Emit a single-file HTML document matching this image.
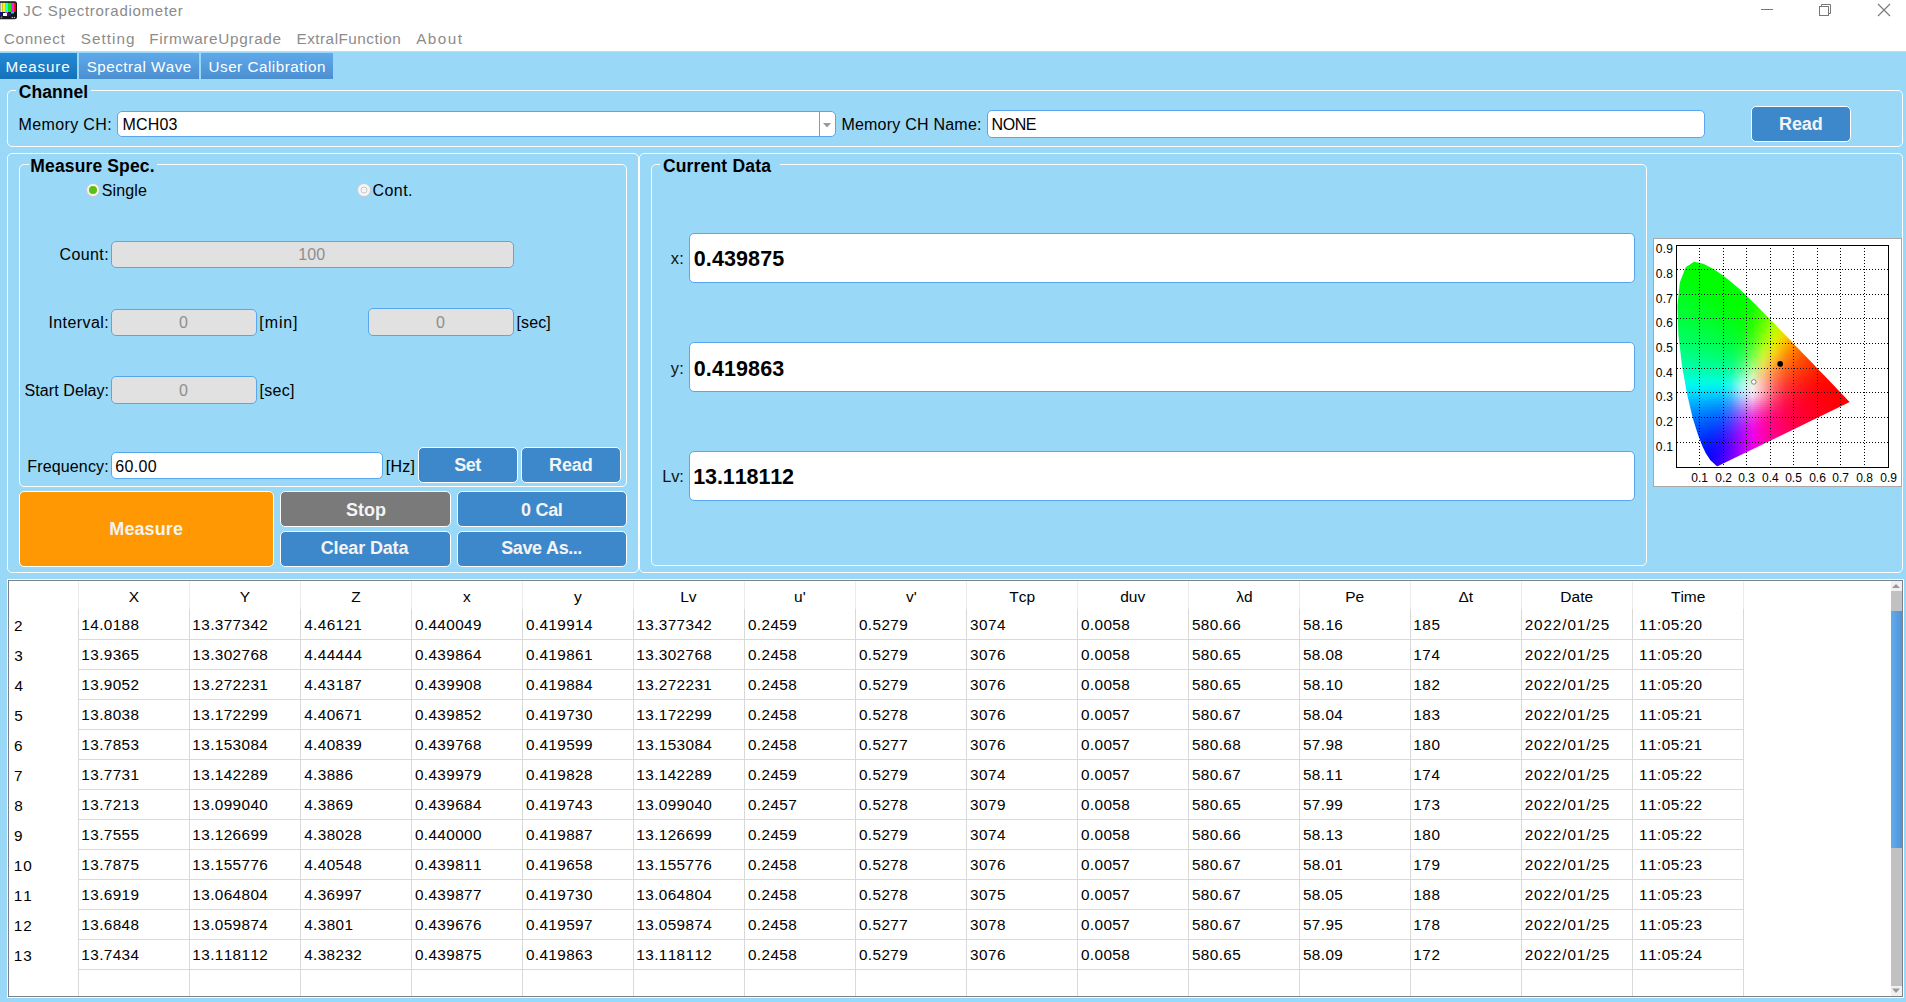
<!DOCTYPE html><html><head><meta charset="utf-8"><style>
html,body{margin:0;padding:0;}
body{width:1906px;height:1002px;position:relative;overflow:hidden;background:#99d8f7;font-family:"Liberation Sans", sans-serif;font-kerning:none;}
.t{position:absolute;white-space:nowrap;font-kerning:none;}
.r{position:absolute;box-sizing:border-box;}

</style></head><body>
<div class="r" style="left:0px;top:0px;width:1906px;height:51px;background:#fff;"></div>
<div class="r" style="left:0px;top:51px;width:1906px;height:1px;background:#d9d6d4;"></div>
<svg style="position:absolute;left:0;top:0" width="19" height="21" viewBox="0 0 19 21">
<rect x="-2" y="1.2" width="19" height="18" rx="2.5" fill="#141414"/>
<rect x="-1" y="2.8" width="2.1" height="9.2" fill="#a8a8a8"/>
<rect x="1.1" y="2.8" width="1.3" height="9.2" fill="#fff"/>
<rect x="2.4" y="2.8" width="2.6" height="9.2" fill="#f8f800"/>
<rect x="5" y="2.8" width="3" height="9.2" fill="#20f8f8"/>
<rect x="8" y="2.8" width="3" height="9.2" fill="#10e810"/>
<rect x="11" y="2.8" width="3" height="9.2" fill="#f820f8"/>
<rect x="14" y="2.8" width="1.8" height="9.2" fill="#f01818"/>
<rect x="-1" y="12" width="3.5" height="4.3" fill="#10108a"/>
<rect x="5" y="12" width="3" height="1.2" fill="#e020e0"/>
<rect x="3" y="13" width="4" height="3" fill="#fff"/>
<rect x="7" y="13" width="4" height="3.3" fill="#2a1580"/>
<rect x="11" y="12" width="3" height="1.5" fill="#20d8d8"/>
<circle cx="1.5" cy="17.5" r="0.9" fill="#e05050"/>
<circle cx="12.3" cy="17.5" r="0.8" fill="#bbb"/>
<circle cx="14.4" cy="17.5" r="0.7" fill="#bbb"/>
</svg>
<div class="t" style="left:23.17px;top:2px;font-size:15.0px;line-height:17px;letter-spacing:0.726px;color:#8a8a8a;">JC Spectroradiometer</div>
<div class="r" style="left:1761px;top:9px;width:12px;height:1px;background:#777;"></div>
<svg style="position:absolute;left:1815px;top:0" width="20" height="20" viewBox="0 0 20 20">
<rect x="4.5" y="6.5" width="9" height="9" fill="none" stroke="#777" stroke-width="1"/>
<path d="M6.5 6.5 V4.5 H15.5 V13.5 H13.5" fill="none" stroke="#777" stroke-width="1"/>
</svg>
<svg style="position:absolute;left:1874px;top:0" width="20" height="20" viewBox="0 0 20 20">
<path d="M4 4 L16 16 M16 4 L4 16" stroke="#777" stroke-width="1.1"/>
</svg>
<div class="t" style="left:3.72px;top:30px;font-size:15.3px;line-height:17px;letter-spacing:0.684px;color:#8c8c8c;">Connect</div>
<div class="t" style="left:80.71px;top:30px;font-size:15.3px;line-height:17px;letter-spacing:1.025px;color:#8c8c8c;">Setting</div>
<div class="t" style="left:149.14px;top:30px;font-size:15.3px;line-height:17px;letter-spacing:0.678px;color:#8c8c8c;">FirmwareUpgrade</div>
<div class="t" style="left:296.44px;top:30px;font-size:15.3px;line-height:17px;letter-spacing:0.497px;color:#8c8c8c;">ExtralFunction</div>
<div class="t" style="left:416.17px;top:30px;font-size:15.3px;line-height:17px;letter-spacing:1.440px;color:#8c8c8c;">About</div>
<div class="r" style="left:0px;top:53px;width:77px;height:26px;background:linear-gradient(#238ad6,#1571b9);"></div>
<div class="r" style="left:79px;top:53px;width:120px;height:26px;background:linear-gradient(#5ea9eb,#4c8fd0);"></div>
<div class="r" style="left:201px;top:53px;width:132px;height:26px;background:linear-gradient(#5ea9eb,#4c8fd0);"></div>
<div class="t" style="left:5.45px;top:58px;font-size:15.2px;line-height:17px;letter-spacing:0.847px;color:#fff;">Measure</div>
<div class="t" style="left:86.71px;top:58px;font-size:15.2px;line-height:17px;letter-spacing:0.486px;color:#fff;">Spectral Wave</div>
<div class="t" style="left:208.53px;top:58px;font-size:15.2px;line-height:17px;letter-spacing:0.532px;color:#fff;">User Calibration</div>
<div class="r" style="left:7px;top:90px;width:1896px;height:57px;border:1.5px solid #fff;border-radius:5px;"></div>
<div class="r" style="left:16px;top:89px;width:75px;height:4px;background:#99d8f7;"></div>
<div class="t" style="left:18.68px;top:82px;font-size:17.5px;line-height:20px;letter-spacing:0.070px;color:#000; font-weight:bold;">Channel</div>
<div class="t" style="left:18.49px;top:116px;font-size:16px;line-height:17px;letter-spacing:0.377px;color:#000;">Memory CH:</div>
<div class="r" style="left:117px;top:111px;width:719px;height:26px;background:#fff;border:1px solid #58a6ee;border-radius:5px;"></div>
<div class="r" style="left:819px;top:112px;width:1px;height:24px;background:#58a6ee;"></div>
<svg style="position:absolute;left:821px;top:121px" width="12" height="8"><path d="M2 2 L10 2 L6 6.5 Z" fill="#999"/></svg>
<div class="t" style="left:122.39px;top:116px;font-size:16px;line-height:17px;letter-spacing:0.195px;color:#000;">MCH03</div>
<div class="t" style="left:841.39px;top:116px;font-size:16px;line-height:17px;letter-spacing:0.226px;color:#000;">Memory CH Name:</div>
<div class="r" style="left:987px;top:110px;width:718px;height:28px;background:#fff;border:1px solid #58a6ee;border-radius:5px;"></div>
<div class="t" style="left:991.49px;top:116px;font-size:16px;line-height:17px;letter-spacing:-0.409px;color:#000;">NONE</div>
<div class="r" style="left:1751px;top:106px;width:100px;height:36px;background:#3c88cb;border:1px solid #fff;border-radius:5px;"></div>
<div class="t" style="left:1779.10px;top:114px;font-size:18px;line-height:20px;letter-spacing:-0.142px;color:#f4f4f4; font-weight:bold;">Read</div>
<div class="r" style="left:7px;top:153px;width:632px;height:420px;border:1.5px solid #fff;border-radius:5px;"></div>
<div class="r" style="left:19px;top:164px;width:608px;height:323px;border:1.5px solid #fff;border-radius:5px;"></div>
<div class="r" style="left:29px;top:163px;width:128px;height:4px;background:#99d8f7;"></div>
<div class="t" style="left:30.33px;top:156px;font-size:17.5px;line-height:20px;letter-spacing:0.135px;color:#000; font-weight:bold;">Measure Spec.</div>
<svg style="position:absolute;left:84.6px;top:182.2px" width="16" height="16"><circle cx="8" cy="8" r="6.5" fill="#f6f6f6" stroke="#c9c9c9" stroke-width="1"/><circle cx="8" cy="8" r="4" fill="#5cc010"/></svg>
<div class="t" style="left:101.67px;top:182px;font-size:16px;line-height:17px;letter-spacing:0.172px;color:#000;">Single</div>
<svg style="position:absolute;left:355.6px;top:182.2px" width="16" height="16"><circle cx="8" cy="8" r="6.5" fill="#f6f6f6" stroke="#c9c9c9" stroke-width="1"/><circle cx="8" cy="8" r="3" fill="none" stroke="#c8c8c8" stroke-width="1"/></svg>
<div class="t" style="left:372.49px;top:182px;font-size:16px;line-height:17px;letter-spacing:0.458px;color:#000;">Cont.</div>
<div class="t" style="left:59.49px;top:246px;font-size:16px;line-height:17px;letter-spacing:0.407px;color:#000;">Count:</div>
<div class="r" style="left:111px;top:241px;width:403px;height:27px;background:#e1e1e1;border:1px solid #58a6ee;border-radius:5px;"></div>
<div class="t" style="left:298.36px;top:246px;font-size:16px;line-height:17px;letter-spacing:0.000px;color:#8e8e8e;">100</div>
<div class="t" style="left:48.42px;top:314px;font-size:16px;line-height:17px;letter-spacing:0.415px;color:#000;">Interval:</div>
<div class="r" style="left:111px;top:309px;width:146px;height:27px;background:#e1e1e1;border:1px solid #58a6ee;border-radius:5px;"></div>
<div class="t" style="left:179.05px;top:314px;font-size:16px;line-height:17px;letter-spacing:0.000px;color:#8e8e8e;">0</div>
<div class="t" style="left:259.36px;top:314px;font-size:16px;line-height:17px;letter-spacing:0.877px;color:#000;">[min]</div>
<div class="r" style="left:368px;top:308px;width:146px;height:28px;background:#e1e1e1;border:1px solid #58a6ee;border-radius:5px;"></div>
<div class="t" style="left:436.05px;top:314px;font-size:16px;line-height:17px;letter-spacing:0.000px;color:#8e8e8e;">0</div>
<div class="t" style="left:516.56px;top:314px;font-size:16px;line-height:17px;letter-spacing:0.098px;color:#000;">[sec]</div>
<div class="t" style="left:24.57px;top:382px;font-size:16px;line-height:17px;letter-spacing:0.082px;color:#000;">Start Delay:</div>
<div class="r" style="left:111px;top:376px;width:146px;height:28px;background:#e1e1e1;border:1px solid #58a6ee;border-radius:5px;"></div>
<div class="t" style="left:179.05px;top:382px;font-size:16px;line-height:17px;letter-spacing:0.000px;color:#8e8e8e;">0</div>
<div class="t" style="left:259.56px;top:382px;font-size:16px;line-height:17px;letter-spacing:0.248px;color:#000;">[sec]</div>
<div class="t" style="left:27.29px;top:458px;font-size:16px;line-height:17px;letter-spacing:0.148px;color:#000;">Frequency:</div>
<div class="r" style="left:111px;top:452px;width:272px;height:27px;background:#fff;border:1px solid #58a6ee;border-radius:5px;"></div>
<div class="t" style="left:115.19px;top:458px;font-size:16px;line-height:17px;letter-spacing:0.325px;color:#000;">60.00</div>
<div class="t" style="left:385.86px;top:458px;font-size:16px;line-height:17px;letter-spacing:0.212px;color:#000;">[Hz]</div>
<div class="r" style="left:418px;top:447px;width:100px;height:36px;background:#3c88cb;border:1px solid #fff;border-radius:5px;"></div>
<div class="t" style="left:454.28px;top:455px;font-size:18px;line-height:20px;letter-spacing:-0.536px;color:#f4f4f4; font-weight:bold;">Set</div>
<div class="r" style="left:521px;top:447px;width:100px;height:36px;background:#3c88cb;border:1px solid #fff;border-radius:5px;"></div>
<div class="t" style="left:549.00px;top:455px;font-size:18px;line-height:20px;letter-spacing:-0.075px;color:#f4f4f4; font-weight:bold;">Read</div>
<div class="r" style="left:19px;top:491px;width:255px;height:76px;background:#ff9802;border:1px solid #fff;border-radius:5px;"></div>
<div class="t" style="left:109.30px;top:519px;font-size:18px;line-height:20px;letter-spacing:0.097px;color:#f4f4f4; font-weight:bold;">Measure</div>
<div class="r" style="left:280px;top:491px;width:171px;height:36px;background:#7a7a7a;border:1px solid #fff;border-radius:5px;"></div>
<div class="t" style="left:345.98px;top:500px;font-size:18px;line-height:20px;letter-spacing:0.022px;color:#f4f4f4; font-weight:bold;">Stop</div>
<div class="r" style="left:457px;top:491px;width:170px;height:36px;background:#3c88cb;border:1px solid #fff;border-radius:5px;"></div>
<div class="t" style="left:520.99px;top:500px;font-size:18px;line-height:20px;letter-spacing:-0.284px;color:#f4f4f4; font-weight:bold;">0 Cal</div>
<div class="r" style="left:280px;top:531px;width:171px;height:36px;background:#3c88cb;border:1px solid #fff;border-radius:5px;"></div>
<div class="t" style="left:320.76px;top:538px;font-size:18px;line-height:20px;letter-spacing:-0.146px;color:#f4f4f4; font-weight:bold;">Clear Data</div>
<div class="r" style="left:457px;top:531px;width:170px;height:36px;background:#3c88cb;border:1px solid #fff;border-radius:5px;"></div>
<div class="t" style="left:501.28px;top:538px;font-size:18px;line-height:20px;letter-spacing:-0.444px;color:#f4f4f4; font-weight:bold;">Save As...</div>
<div class="r" style="left:639px;top:153px;width:1264px;height:420px;border:1.5px solid #fff;border-radius:5px;"></div>
<div class="r" style="left:651px;top:164px;width:996px;height:402px;border:1.5px solid #fff;border-radius:5px;"></div>
<div class="r" style="left:660px;top:163px;width:120px;height:4px;background:#99d8f7;"></div>
<div class="t" style="left:662.88px;top:156px;font-size:17.5px;line-height:20px;letter-spacing:0.183px;color:#000; font-weight:bold;">Current Data</div>
<div class="r" style="left:689px;top:233px;width:946px;height:50px;background:#fff;border:1px solid #58a6ee;border-radius:5px;"></div>
<div class="t" style="left:670.81px;top:249px;font-size:16.5px;line-height:18px;letter-spacing:0.158px;color:#111;">x:</div>
<div class="t" style="left:693.75px;top:247px;font-size:21.5px;line-height:24px;letter-spacing:0.111px;color:#000; font-weight:bold;">0.439875</div>
<div class="r" style="left:689px;top:342px;width:946px;height:50px;background:#fff;border:1px solid #58a6ee;border-radius:5px;"></div>
<div class="t" style="left:670.76px;top:359px;font-size:16.5px;line-height:18px;letter-spacing:0.213px;color:#111;">y:</div>
<div class="t" style="left:693.75px;top:357px;font-size:21.5px;line-height:24px;letter-spacing:0.108px;color:#000; font-weight:bold;">0.419863</div>
<div class="r" style="left:689px;top:451px;width:946px;height:50px;background:#fff;border:1px solid #58a6ee;border-radius:5px;"></div>
<div class="t" style="left:662.25px;top:467px;font-size:16.5px;line-height:18px;letter-spacing:-0.225px;color:#111;">Lv:</div>
<div class="t" style="left:693.25px;top:465px;font-size:21.5px;line-height:24px;letter-spacing:-0.102px;color:#000; font-weight:bold;">13.118112</div>
<svg style="position:absolute;left:1653px;top:238px" width="249" height="249" viewBox="1653 238 249 249"><rect x="1653.5" y="238.5" width="248" height="248" fill="#fff" stroke="#a8a8a8" stroke-width="1"/><defs><clipPath id="lc"><polygon points="1717.5,466.3 1717.5,466.3 1717.3,466.3 1716.9,466.2 1716.3,465.8 1715.2,464.8 1713.4,463.1 1710.4,460.2 1705.8,453.2 1702.3,446.1 1698.0,434.8 1692.7,418.0 1687.2,394.7 1682.0,365.7 1678.4,334.7 1677.4,306.0 1679.8,282.4 1685.7,267.2 1694.0,261.8 1703.4,263.7 1713.0,268.7 1722.0,274.7 1730.6,281.4 1739.1,288.8 1747.6,296.7 1756.0,304.9 1764.4,313.4 1772.8,322.0 1781.2,330.7 1789.4,339.2 1797.3,347.5 1804.9,355.4 1812.1,362.8 1818.6,369.7 1824.3,375.6 1833.4,385.1 1839.5,391.4 1843.4,395.5 1846.0,398.2 1847.6,399.9 1849.7,402.1"/></clipPath><linearGradient id="g0" gradientUnits="userSpaceOnUse" x1="1676" x2="1851" y1="0" y2="0"><stop offset="0.000" stop-color="#00ff02"/><stop offset="0.062" stop-color="#00ff00"/><stop offset="0.125" stop-color="#00ff00"/><stop offset="0.188" stop-color="#00ff00"/><stop offset="0.250" stop-color="#00ff00"/><stop offset="0.312" stop-color="#00ff00"/><stop offset="0.375" stop-color="#00ff00"/><stop offset="0.438" stop-color="#00ff00"/><stop offset="0.500" stop-color="#0aff00"/><stop offset="0.562" stop-color="#27ff00"/><stop offset="0.625" stop-color="#50ff00"/><stop offset="0.688" stop-color="#7eff00"/><stop offset="0.750" stop-color="#afff00"/><stop offset="0.812" stop-color="#e0fb00"/><stop offset="0.875" stop-color="#fbe100"/><stop offset="0.938" stop-color="#ffba00"/><stop offset="1.000" stop-color="#ff9a00"/></linearGradient><linearGradient id="g1" gradientUnits="userSpaceOnUse" x1="1676" x2="1851" y1="0" y2="0"><stop offset="0.000" stop-color="#00ff03"/><stop offset="0.062" stop-color="#00ff01"/><stop offset="0.125" stop-color="#00ff00"/><stop offset="0.188" stop-color="#00ff00"/><stop offset="0.250" stop-color="#00ff00"/><stop offset="0.312" stop-color="#00ff00"/><stop offset="0.375" stop-color="#00ff00"/><stop offset="0.438" stop-color="#01ff00"/><stop offset="0.500" stop-color="#0cff00"/><stop offset="0.562" stop-color="#2aff00"/><stop offset="0.625" stop-color="#53ff00"/><stop offset="0.688" stop-color="#81ff00"/><stop offset="0.750" stop-color="#b4ff00"/><stop offset="0.812" stop-color="#e4f900"/><stop offset="0.875" stop-color="#fcdd00"/><stop offset="0.938" stop-color="#ffb600"/><stop offset="1.000" stop-color="#ff9600"/></linearGradient><linearGradient id="g2" gradientUnits="userSpaceOnUse" x1="1676" x2="1851" y1="0" y2="0"><stop offset="0.000" stop-color="#00ff05"/><stop offset="0.062" stop-color="#00ff01"/><stop offset="0.125" stop-color="#00ff00"/><stop offset="0.188" stop-color="#00ff00"/><stop offset="0.250" stop-color="#00ff00"/><stop offset="0.312" stop-color="#00ff00"/><stop offset="0.375" stop-color="#00ff00"/><stop offset="0.438" stop-color="#01ff00"/><stop offset="0.500" stop-color="#0dff00"/><stop offset="0.562" stop-color="#2cff00"/><stop offset="0.625" stop-color="#57ff00"/><stop offset="0.688" stop-color="#85ff00"/><stop offset="0.750" stop-color="#b8ff00"/><stop offset="0.812" stop-color="#e8f700"/><stop offset="0.875" stop-color="#fdd800"/><stop offset="0.938" stop-color="#ffb100"/><stop offset="1.000" stop-color="#ff9300"/></linearGradient><linearGradient id="g3" gradientUnits="userSpaceOnUse" x1="1676" x2="1851" y1="0" y2="0"><stop offset="0.000" stop-color="#00ff06"/><stop offset="0.062" stop-color="#00ff02"/><stop offset="0.125" stop-color="#00ff00"/><stop offset="0.188" stop-color="#00ff00"/><stop offset="0.250" stop-color="#00ff00"/><stop offset="0.312" stop-color="#00ff00"/><stop offset="0.375" stop-color="#00ff00"/><stop offset="0.438" stop-color="#01ff00"/><stop offset="0.500" stop-color="#0eff00"/><stop offset="0.562" stop-color="#2eff00"/><stop offset="0.625" stop-color="#5aff00"/><stop offset="0.688" stop-color="#89ff00"/><stop offset="0.750" stop-color="#bdff00"/><stop offset="0.812" stop-color="#ebf500"/><stop offset="0.875" stop-color="#fdd400"/><stop offset="0.938" stop-color="#ffad00"/><stop offset="1.000" stop-color="#ff8f00"/></linearGradient><linearGradient id="g4" gradientUnits="userSpaceOnUse" x1="1676" x2="1851" y1="0" y2="0"><stop offset="0.000" stop-color="#00ff07"/><stop offset="0.062" stop-color="#00ff02"/><stop offset="0.125" stop-color="#00ff00"/><stop offset="0.188" stop-color="#00ff00"/><stop offset="0.250" stop-color="#00ff00"/><stop offset="0.312" stop-color="#00ff00"/><stop offset="0.375" stop-color="#00ff00"/><stop offset="0.438" stop-color="#01ff00"/><stop offset="0.500" stop-color="#10ff00"/><stop offset="0.562" stop-color="#31ff00"/><stop offset="0.625" stop-color="#5dff00"/><stop offset="0.688" stop-color="#8eff00"/><stop offset="0.750" stop-color="#c2fe00"/><stop offset="0.812" stop-color="#eff300"/><stop offset="0.875" stop-color="#fecf00"/><stop offset="0.938" stop-color="#ffa900"/><stop offset="1.000" stop-color="#ff8c00"/></linearGradient><linearGradient id="g5" gradientUnits="userSpaceOnUse" x1="1676" x2="1851" y1="0" y2="0"><stop offset="0.000" stop-color="#00ff09"/><stop offset="0.062" stop-color="#00ff03"/><stop offset="0.125" stop-color="#00ff01"/><stop offset="0.188" stop-color="#00ff00"/><stop offset="0.250" stop-color="#00ff00"/><stop offset="0.312" stop-color="#00ff00"/><stop offset="0.375" stop-color="#00ff00"/><stop offset="0.438" stop-color="#01ff00"/><stop offset="0.500" stop-color="#11ff00"/><stop offset="0.562" stop-color="#34ff00"/><stop offset="0.625" stop-color="#61ff00"/><stop offset="0.688" stop-color="#92ff00"/><stop offset="0.750" stop-color="#c7fe00"/><stop offset="0.812" stop-color="#f2f000"/><stop offset="0.875" stop-color="#feca00"/><stop offset="0.938" stop-color="#ffa500"/><stop offset="1.000" stop-color="#ff8800"/></linearGradient><linearGradient id="g6" gradientUnits="userSpaceOnUse" x1="1676" x2="1851" y1="0" y2="0"><stop offset="0.000" stop-color="#00ff0a"/><stop offset="0.062" stop-color="#00ff04"/><stop offset="0.125" stop-color="#00ff01"/><stop offset="0.188" stop-color="#00ff00"/><stop offset="0.250" stop-color="#00ff00"/><stop offset="0.312" stop-color="#00ff00"/><stop offset="0.375" stop-color="#00ff00"/><stop offset="0.438" stop-color="#02ff00"/><stop offset="0.500" stop-color="#13ff00"/><stop offset="0.562" stop-color="#36ff00"/><stop offset="0.625" stop-color="#64ff00"/><stop offset="0.688" stop-color="#96ff00"/><stop offset="0.750" stop-color="#ccfd00"/><stop offset="0.812" stop-color="#f4ec00"/><stop offset="0.875" stop-color="#ffc500"/><stop offset="0.938" stop-color="#ffa100"/><stop offset="1.000" stop-color="#ff8500"/></linearGradient><linearGradient id="g7" gradientUnits="userSpaceOnUse" x1="1676" x2="1851" y1="0" y2="0"><stop offset="0.000" stop-color="#00ff0c"/><stop offset="0.062" stop-color="#00ff05"/><stop offset="0.125" stop-color="#00ff01"/><stop offset="0.188" stop-color="#00ff00"/><stop offset="0.250" stop-color="#00ff00"/><stop offset="0.312" stop-color="#00ff00"/><stop offset="0.375" stop-color="#00ff00"/><stop offset="0.438" stop-color="#02ff00"/><stop offset="0.500" stop-color="#15ff00"/><stop offset="0.562" stop-color="#39ff00"/><stop offset="0.625" stop-color="#68ff00"/><stop offset="0.688" stop-color="#9bff00"/><stop offset="0.750" stop-color="#d1fd00"/><stop offset="0.812" stop-color="#f6e900"/><stop offset="0.875" stop-color="#ffc100"/><stop offset="0.938" stop-color="#ff9d00"/><stop offset="1.000" stop-color="#ff8100"/></linearGradient><linearGradient id="g8" gradientUnits="userSpaceOnUse" x1="1676" x2="1851" y1="0" y2="0"><stop offset="0.000" stop-color="#00ff0e"/><stop offset="0.062" stop-color="#00ff07"/><stop offset="0.125" stop-color="#00ff02"/><stop offset="0.188" stop-color="#00ff00"/><stop offset="0.250" stop-color="#00ff00"/><stop offset="0.312" stop-color="#00ff00"/><stop offset="0.375" stop-color="#00ff00"/><stop offset="0.438" stop-color="#02ff00"/><stop offset="0.500" stop-color="#17ff00"/><stop offset="0.562" stop-color="#3cff00"/><stop offset="0.625" stop-color="#6bff00"/><stop offset="0.688" stop-color="#a0ff00"/><stop offset="0.750" stop-color="#d6fc00"/><stop offset="0.812" stop-color="#f8e500"/><stop offset="0.875" stop-color="#ffbc00"/><stop offset="0.938" stop-color="#ff9900"/><stop offset="1.000" stop-color="#ff7e00"/></linearGradient><linearGradient id="g9" gradientUnits="userSpaceOnUse" x1="1676" x2="1851" y1="0" y2="0"><stop offset="0.000" stop-color="#00ff10"/><stop offset="0.062" stop-color="#00ff09"/><stop offset="0.125" stop-color="#00ff03"/><stop offset="0.188" stop-color="#00ff00"/><stop offset="0.250" stop-color="#00ff00"/><stop offset="0.312" stop-color="#00ff00"/><stop offset="0.375" stop-color="#00ff00"/><stop offset="0.438" stop-color="#03ff00"/><stop offset="0.500" stop-color="#19ff00"/><stop offset="0.562" stop-color="#3fff00"/><stop offset="0.625" stop-color="#6fff00"/><stop offset="0.688" stop-color="#a4ff00"/><stop offset="0.750" stop-color="#dafb00"/><stop offset="0.812" stop-color="#fae000"/><stop offset="0.875" stop-color="#ffb700"/><stop offset="0.938" stop-color="#ff9500"/><stop offset="1.000" stop-color="#ff7b00"/></linearGradient><linearGradient id="g10" gradientUnits="userSpaceOnUse" x1="1676" x2="1851" y1="0" y2="0"><stop offset="0.000" stop-color="#00ff12"/><stop offset="0.062" stop-color="#00ff0a"/><stop offset="0.125" stop-color="#00ff04"/><stop offset="0.188" stop-color="#00ff01"/><stop offset="0.250" stop-color="#00ff00"/><stop offset="0.312" stop-color="#00ff00"/><stop offset="0.375" stop-color="#00ff00"/><stop offset="0.438" stop-color="#03ff00"/><stop offset="0.500" stop-color="#1bff00"/><stop offset="0.562" stop-color="#42ff00"/><stop offset="0.625" stop-color="#73ff00"/><stop offset="0.688" stop-color="#a9ff00"/><stop offset="0.750" stop-color="#dff900"/><stop offset="0.812" stop-color="#fbdc00"/><stop offset="0.875" stop-color="#ffb200"/><stop offset="0.938" stop-color="#ff9100"/><stop offset="1.000" stop-color="#ff7700"/></linearGradient><linearGradient id="g11" gradientUnits="userSpaceOnUse" x1="1676" x2="1851" y1="0" y2="0"><stop offset="0.000" stop-color="#00ff14"/><stop offset="0.062" stop-color="#00ff0c"/><stop offset="0.125" stop-color="#00ff05"/><stop offset="0.188" stop-color="#00ff01"/><stop offset="0.250" stop-color="#00ff00"/><stop offset="0.312" stop-color="#00ff00"/><stop offset="0.375" stop-color="#00ff00"/><stop offset="0.438" stop-color="#04ff00"/><stop offset="0.500" stop-color="#1dff00"/><stop offset="0.562" stop-color="#45ff00"/><stop offset="0.625" stop-color="#77ff00"/><stop offset="0.688" stop-color="#aeff00"/><stop offset="0.750" stop-color="#e3f800"/><stop offset="0.812" stop-color="#fcd700"/><stop offset="0.875" stop-color="#ffae00"/><stop offset="0.938" stop-color="#ff8d00"/><stop offset="1.000" stop-color="#ff7400"/></linearGradient><linearGradient id="g12" gradientUnits="userSpaceOnUse" x1="1676" x2="1851" y1="0" y2="0"><stop offset="0.000" stop-color="#00ff16"/><stop offset="0.062" stop-color="#00ff0e"/><stop offset="0.125" stop-color="#00ff07"/><stop offset="0.188" stop-color="#00ff02"/><stop offset="0.250" stop-color="#00ff00"/><stop offset="0.312" stop-color="#00ff00"/><stop offset="0.375" stop-color="#00ff00"/><stop offset="0.438" stop-color="#04ff00"/><stop offset="0.500" stop-color="#1fff00"/><stop offset="0.562" stop-color="#48ff00"/><stop offset="0.625" stop-color="#7bff00"/><stop offset="0.688" stop-color="#b4ff00"/><stop offset="0.750" stop-color="#e7f500"/><stop offset="0.812" stop-color="#fdd200"/><stop offset="0.875" stop-color="#ffa900"/><stop offset="0.938" stop-color="#ff8900"/><stop offset="1.000" stop-color="#ff7100"/></linearGradient><linearGradient id="g13" gradientUnits="userSpaceOnUse" x1="1676" x2="1851" y1="0" y2="0"><stop offset="0.000" stop-color="#00ff18"/><stop offset="0.062" stop-color="#00ff10"/><stop offset="0.125" stop-color="#00ff08"/><stop offset="0.188" stop-color="#00ff02"/><stop offset="0.250" stop-color="#00ff00"/><stop offset="0.312" stop-color="#00ff00"/><stop offset="0.375" stop-color="#00ff00"/><stop offset="0.438" stop-color="#05ff00"/><stop offset="0.500" stop-color="#22ff00"/><stop offset="0.562" stop-color="#4cff00"/><stop offset="0.625" stop-color="#80ff00"/><stop offset="0.688" stop-color="#b9fe00"/><stop offset="0.750" stop-color="#ebf300"/><stop offset="0.812" stop-color="#fecd00"/><stop offset="0.875" stop-color="#ffa400"/><stop offset="0.938" stop-color="#ff8500"/><stop offset="1.000" stop-color="#ff6e00"/></linearGradient><linearGradient id="g14" gradientUnits="userSpaceOnUse" x1="1676" x2="1851" y1="0" y2="0"><stop offset="0.000" stop-color="#00ff1a"/><stop offset="0.062" stop-color="#00ff12"/><stop offset="0.125" stop-color="#00ff0a"/><stop offset="0.188" stop-color="#00ff03"/><stop offset="0.250" stop-color="#00ff01"/><stop offset="0.312" stop-color="#00ff00"/><stop offset="0.375" stop-color="#00ff00"/><stop offset="0.438" stop-color="#06ff00"/><stop offset="0.500" stop-color="#24ff00"/><stop offset="0.562" stop-color="#4fff00"/><stop offset="0.625" stop-color="#84ff00"/><stop offset="0.688" stop-color="#befe00"/><stop offset="0.750" stop-color="#eff000"/><stop offset="0.812" stop-color="#fec800"/><stop offset="0.875" stop-color="#ffa000"/><stop offset="0.938" stop-color="#ff8200"/><stop offset="1.000" stop-color="#ff6b00"/></linearGradient><linearGradient id="g15" gradientUnits="userSpaceOnUse" x1="1676" x2="1851" y1="0" y2="0"><stop offset="0.000" stop-color="#00ff1d"/><stop offset="0.062" stop-color="#00ff15"/><stop offset="0.125" stop-color="#00ff0c"/><stop offset="0.188" stop-color="#00ff05"/><stop offset="0.250" stop-color="#00ff01"/><stop offset="0.312" stop-color="#00ff00"/><stop offset="0.375" stop-color="#00ff00"/><stop offset="0.438" stop-color="#07ff00"/><stop offset="0.500" stop-color="#27ff00"/><stop offset="0.562" stop-color="#53ff00"/><stop offset="0.625" stop-color="#89ff00"/><stop offset="0.688" stop-color="#c4fe00"/><stop offset="0.750" stop-color="#f2ec00"/><stop offset="0.812" stop-color="#fec300"/><stop offset="0.875" stop-color="#ff9c00"/><stop offset="0.938" stop-color="#ff7e00"/><stop offset="1.000" stop-color="#ff6800"/></linearGradient><linearGradient id="g16" gradientUnits="userSpaceOnUse" x1="1676" x2="1851" y1="0" y2="0"><stop offset="0.000" stop-color="#00ff1f"/><stop offset="0.062" stop-color="#00ff17"/><stop offset="0.125" stop-color="#00ff0e"/><stop offset="0.188" stop-color="#00ff06"/><stop offset="0.250" stop-color="#00ff01"/><stop offset="0.312" stop-color="#00ff00"/><stop offset="0.375" stop-color="#00ff00"/><stop offset="0.438" stop-color="#08ff00"/><stop offset="0.500" stop-color="#29ff00"/><stop offset="0.562" stop-color="#56ff00"/><stop offset="0.625" stop-color="#8eff00"/><stop offset="0.688" stop-color="#c9fd00"/><stop offset="0.750" stop-color="#f4e900"/><stop offset="0.812" stop-color="#ffbe00"/><stop offset="0.875" stop-color="#ff9700"/><stop offset="0.938" stop-color="#ff7b00"/><stop offset="1.000" stop-color="#ff6400"/></linearGradient><linearGradient id="g17" gradientUnits="userSpaceOnUse" x1="1676" x2="1851" y1="0" y2="0"><stop offset="0.000" stop-color="#00ff21"/><stop offset="0.062" stop-color="#00ff19"/><stop offset="0.125" stop-color="#00ff10"/><stop offset="0.188" stop-color="#00ff08"/><stop offset="0.250" stop-color="#00ff02"/><stop offset="0.312" stop-color="#00ff00"/><stop offset="0.375" stop-color="#00ff00"/><stop offset="0.438" stop-color="#09ff00"/><stop offset="0.500" stop-color="#2cff00"/><stop offset="0.562" stop-color="#5aff00"/><stop offset="0.625" stop-color="#93ff00"/><stop offset="0.688" stop-color="#cefc00"/><stop offset="0.750" stop-color="#f7e400"/><stop offset="0.812" stop-color="#ffb800"/><stop offset="0.875" stop-color="#ff9300"/><stop offset="0.938" stop-color="#ff7700"/><stop offset="1.000" stop-color="#ff6100"/></linearGradient><linearGradient id="g18" gradientUnits="userSpaceOnUse" x1="1676" x2="1851" y1="0" y2="0"><stop offset="0.000" stop-color="#00ff23"/><stop offset="0.062" stop-color="#00ff1b"/><stop offset="0.125" stop-color="#00ff13"/><stop offset="0.188" stop-color="#00ff0a"/><stop offset="0.250" stop-color="#00ff03"/><stop offset="0.312" stop-color="#00ff00"/><stop offset="0.375" stop-color="#00ff00"/><stop offset="0.438" stop-color="#0aff00"/><stop offset="0.500" stop-color="#2fff00"/><stop offset="0.562" stop-color="#5eff00"/><stop offset="0.625" stop-color="#98ff00"/><stop offset="0.688" stop-color="#d4fb00"/><stop offset="0.750" stop-color="#f8e000"/><stop offset="0.812" stop-color="#ffb300"/><stop offset="0.875" stop-color="#ff8f00"/><stop offset="0.938" stop-color="#ff7300"/><stop offset="1.000" stop-color="#ff5e00"/></linearGradient><linearGradient id="g19" gradientUnits="userSpaceOnUse" x1="1676" x2="1851" y1="0" y2="0"><stop offset="0.000" stop-color="#00ff26"/><stop offset="0.062" stop-color="#00ff1e"/><stop offset="0.125" stop-color="#00ff15"/><stop offset="0.188" stop-color="#00ff0c"/><stop offset="0.250" stop-color="#00ff04"/><stop offset="0.312" stop-color="#00ff01"/><stop offset="0.375" stop-color="#00ff00"/><stop offset="0.438" stop-color="#0bff00"/><stop offset="0.500" stop-color="#32ff00"/><stop offset="0.562" stop-color="#62ff00"/><stop offset="0.625" stop-color="#9dff00"/><stop offset="0.688" stop-color="#d9fa00"/><stop offset="0.750" stop-color="#fadb00"/><stop offset="0.812" stop-color="#ffae00"/><stop offset="0.875" stop-color="#ff8a00"/><stop offset="0.938" stop-color="#ff7000"/><stop offset="1.000" stop-color="#ff5b00"/></linearGradient><linearGradient id="g20" gradientUnits="userSpaceOnUse" x1="1676" x2="1851" y1="0" y2="0"><stop offset="0.000" stop-color="#00ff28"/><stop offset="0.062" stop-color="#00ff20"/><stop offset="0.125" stop-color="#00ff18"/><stop offset="0.188" stop-color="#00ff0e"/><stop offset="0.250" stop-color="#00ff06"/><stop offset="0.312" stop-color="#00ff01"/><stop offset="0.375" stop-color="#01ff00"/><stop offset="0.438" stop-color="#0cff00"/><stop offset="0.500" stop-color="#35ff00"/><stop offset="0.562" stop-color="#66ff00"/><stop offset="0.625" stop-color="#a2ff00"/><stop offset="0.688" stop-color="#def800"/><stop offset="0.750" stop-color="#fbd600"/><stop offset="0.812" stop-color="#ffa900"/><stop offset="0.875" stop-color="#ff8600"/><stop offset="0.938" stop-color="#ff6d00"/><stop offset="1.000" stop-color="#ff5900"/></linearGradient><linearGradient id="g21" gradientUnits="userSpaceOnUse" x1="1676" x2="1851" y1="0" y2="0"><stop offset="0.000" stop-color="#00ff2b"/><stop offset="0.062" stop-color="#00ff23"/><stop offset="0.125" stop-color="#00ff1a"/><stop offset="0.188" stop-color="#00ff11"/><stop offset="0.250" stop-color="#00ff08"/><stop offset="0.312" stop-color="#00ff02"/><stop offset="0.375" stop-color="#01ff00"/><stop offset="0.438" stop-color="#0eff00"/><stop offset="0.500" stop-color="#38ff00"/><stop offset="0.562" stop-color="#6bff00"/><stop offset="0.625" stop-color="#a8ff00"/><stop offset="0.688" stop-color="#e2f600"/><stop offset="0.750" stop-color="#fcd000"/><stop offset="0.812" stop-color="#ffa400"/><stop offset="0.875" stop-color="#ff8200"/><stop offset="0.938" stop-color="#ff6900"/><stop offset="1.000" stop-color="#ff5600"/></linearGradient><linearGradient id="g22" gradientUnits="userSpaceOnUse" x1="1676" x2="1851" y1="0" y2="0"><stop offset="0.000" stop-color="#00ff2d"/><stop offset="0.062" stop-color="#00ff25"/><stop offset="0.125" stop-color="#00ff1d"/><stop offset="0.188" stop-color="#00ff13"/><stop offset="0.250" stop-color="#00ff0a"/><stop offset="0.312" stop-color="#00ff03"/><stop offset="0.375" stop-color="#01ff00"/><stop offset="0.438" stop-color="#10ff00"/><stop offset="0.500" stop-color="#3cff00"/><stop offset="0.562" stop-color="#6fff00"/><stop offset="0.625" stop-color="#aefe00"/><stop offset="0.688" stop-color="#e7f300"/><stop offset="0.750" stop-color="#fdcb00"/><stop offset="0.812" stop-color="#ff9f00"/><stop offset="0.875" stop-color="#ff7e00"/><stop offset="0.938" stop-color="#ff6600"/><stop offset="1.000" stop-color="#ff5300"/></linearGradient><linearGradient id="g23" gradientUnits="userSpaceOnUse" x1="1676" x2="1851" y1="0" y2="0"><stop offset="0.000" stop-color="#00ff30"/><stop offset="0.062" stop-color="#00ff28"/><stop offset="0.125" stop-color="#00ff1f"/><stop offset="0.188" stop-color="#00ff16"/><stop offset="0.250" stop-color="#00ff0c"/><stop offset="0.312" stop-color="#00ff04"/><stop offset="0.375" stop-color="#01ff01"/><stop offset="0.438" stop-color="#11ff00"/><stop offset="0.500" stop-color="#3fff00"/><stop offset="0.562" stop-color="#74ff00"/><stop offset="0.625" stop-color="#b3fe00"/><stop offset="0.688" stop-color="#ebf000"/><stop offset="0.750" stop-color="#fec500"/><stop offset="0.812" stop-color="#ff9a00"/><stop offset="0.875" stop-color="#ff7a00"/><stop offset="0.938" stop-color="#ff6200"/><stop offset="1.000" stop-color="#ff5000"/></linearGradient><linearGradient id="g24" gradientUnits="userSpaceOnUse" x1="1676" x2="1851" y1="0" y2="0"><stop offset="0.000" stop-color="#00ff33"/><stop offset="0.062" stop-color="#00ff2b"/><stop offset="0.125" stop-color="#00ff22"/><stop offset="0.188" stop-color="#00ff19"/><stop offset="0.250" stop-color="#00ff0e"/><stop offset="0.312" stop-color="#00ff06"/><stop offset="0.375" stop-color="#01ff01"/><stop offset="0.438" stop-color="#13ff00"/><stop offset="0.500" stop-color="#43ff00"/><stop offset="0.562" stop-color="#79ff00"/><stop offset="0.625" stop-color="#b9fe00"/><stop offset="0.688" stop-color="#eeec00"/><stop offset="0.750" stop-color="#fec000"/><stop offset="0.812" stop-color="#ff9500"/><stop offset="0.875" stop-color="#ff7600"/><stop offset="0.938" stop-color="#ff5f00"/><stop offset="1.000" stop-color="#ff4d00"/></linearGradient><linearGradient id="g25" gradientUnits="userSpaceOnUse" x1="1676" x2="1851" y1="0" y2="0"><stop offset="0.000" stop-color="#00ff36"/><stop offset="0.062" stop-color="#00ff2e"/><stop offset="0.125" stop-color="#00ff25"/><stop offset="0.188" stop-color="#00ff1b"/><stop offset="0.250" stop-color="#00ff11"/><stop offset="0.312" stop-color="#00ff07"/><stop offset="0.375" stop-color="#02ff02"/><stop offset="0.438" stop-color="#15ff00"/><stop offset="0.500" stop-color="#47ff00"/><stop offset="0.562" stop-color="#7eff00"/><stop offset="0.625" stop-color="#bffd00"/><stop offset="0.688" stop-color="#f1e800"/><stop offset="0.750" stop-color="#feba00"/><stop offset="0.812" stop-color="#ff9100"/><stop offset="0.875" stop-color="#ff7300"/><stop offset="0.938" stop-color="#ff5c00"/><stop offset="1.000" stop-color="#ff4a00"/></linearGradient><linearGradient id="g26" gradientUnits="userSpaceOnUse" x1="1676" x2="1851" y1="0" y2="0"><stop offset="0.000" stop-color="#00ff38"/><stop offset="0.062" stop-color="#00ff30"/><stop offset="0.125" stop-color="#00ff28"/><stop offset="0.188" stop-color="#00ff1e"/><stop offset="0.250" stop-color="#00ff14"/><stop offset="0.312" stop-color="#00ff0a"/><stop offset="0.375" stop-color="#02ff03"/><stop offset="0.438" stop-color="#17ff00"/><stop offset="0.500" stop-color="#4bff00"/><stop offset="0.562" stop-color="#83ff00"/><stop offset="0.625" stop-color="#c5fc00"/><stop offset="0.688" stop-color="#f4e400"/><stop offset="0.750" stop-color="#ffb400"/><stop offset="0.812" stop-color="#ff8c00"/><stop offset="0.875" stop-color="#ff6f00"/><stop offset="0.938" stop-color="#ff5900"/><stop offset="1.000" stop-color="#ff4800"/></linearGradient><linearGradient id="g27" gradientUnits="userSpaceOnUse" x1="1676" x2="1851" y1="0" y2="0"><stop offset="0.000" stop-color="#00ff3b"/><stop offset="0.062" stop-color="#00ff33"/><stop offset="0.125" stop-color="#00ff2b"/><stop offset="0.188" stop-color="#00ff21"/><stop offset="0.250" stop-color="#00ff17"/><stop offset="0.312" stop-color="#00ff0c"/><stop offset="0.375" stop-color="#02ff04"/><stop offset="0.438" stop-color="#1aff01"/><stop offset="0.500" stop-color="#4fff00"/><stop offset="0.562" stop-color="#88ff00"/><stop offset="0.625" stop-color="#cbfb00"/><stop offset="0.688" stop-color="#f7df00"/><stop offset="0.750" stop-color="#ffaf00"/><stop offset="0.812" stop-color="#ff8700"/><stop offset="0.875" stop-color="#ff6b00"/><stop offset="0.938" stop-color="#ff5600"/><stop offset="1.000" stop-color="#ff4500"/></linearGradient><linearGradient id="g28" gradientUnits="userSpaceOnUse" x1="1676" x2="1851" y1="0" y2="0"><stop offset="0.000" stop-color="#00ff3e"/><stop offset="0.062" stop-color="#00ff36"/><stop offset="0.125" stop-color="#00ff2e"/><stop offset="0.188" stop-color="#00ff24"/><stop offset="0.250" stop-color="#00ff1a"/><stop offset="0.312" stop-color="#00ff0f"/><stop offset="0.375" stop-color="#03ff05"/><stop offset="0.438" stop-color="#1cff01"/><stop offset="0.500" stop-color="#53ff00"/><stop offset="0.562" stop-color="#8eff00"/><stop offset="0.625" stop-color="#d1fa00"/><stop offset="0.688" stop-color="#f9da00"/><stop offset="0.750" stop-color="#ffa900"/><stop offset="0.812" stop-color="#ff8300"/><stop offset="0.875" stop-color="#ff6700"/><stop offset="0.938" stop-color="#ff5300"/><stop offset="1.000" stop-color="#ff4200"/></linearGradient><linearGradient id="g29" gradientUnits="userSpaceOnUse" x1="1676" x2="1851" y1="0" y2="0"><stop offset="0.000" stop-color="#00ff41"/><stop offset="0.062" stop-color="#00ff39"/><stop offset="0.125" stop-color="#00ff31"/><stop offset="0.188" stop-color="#00ff27"/><stop offset="0.250" stop-color="#00ff1d"/><stop offset="0.312" stop-color="#00ff12"/><stop offset="0.375" stop-color="#03ff07"/><stop offset="0.438" stop-color="#1fff02"/><stop offset="0.500" stop-color="#57ff00"/><stop offset="0.562" stop-color="#93ff00"/><stop offset="0.625" stop-color="#d6f800"/><stop offset="0.688" stop-color="#fad400"/><stop offset="0.750" stop-color="#ffa300"/><stop offset="0.812" stop-color="#ff7f00"/><stop offset="0.875" stop-color="#ff6400"/><stop offset="0.938" stop-color="#ff4f00"/><stop offset="1.000" stop-color="#ff4000"/></linearGradient><linearGradient id="g30" gradientUnits="userSpaceOnUse" x1="1676" x2="1851" y1="0" y2="0"><stop offset="0.000" stop-color="#00ff45"/><stop offset="0.062" stop-color="#00ff3d"/><stop offset="0.125" stop-color="#00ff34"/><stop offset="0.188" stop-color="#00ff2a"/><stop offset="0.250" stop-color="#00ff20"/><stop offset="0.312" stop-color="#00ff15"/><stop offset="0.375" stop-color="#04ff0a"/><stop offset="0.438" stop-color="#22ff02"/><stop offset="0.500" stop-color="#5cff00"/><stop offset="0.562" stop-color="#99ff00"/><stop offset="0.625" stop-color="#dcf600"/><stop offset="0.688" stop-color="#fbce00"/><stop offset="0.750" stop-color="#ff9e00"/><stop offset="0.812" stop-color="#ff7a00"/><stop offset="0.875" stop-color="#ff6000"/><stop offset="0.938" stop-color="#ff4c00"/><stop offset="1.000" stop-color="#ff3d00"/></linearGradient><linearGradient id="g31" gradientUnits="userSpaceOnUse" x1="1676" x2="1851" y1="0" y2="0"><stop offset="0.000" stop-color="#00ff48"/><stop offset="0.062" stop-color="#00ff40"/><stop offset="0.125" stop-color="#00ff37"/><stop offset="0.188" stop-color="#00ff2e"/><stop offset="0.250" stop-color="#00ff23"/><stop offset="0.312" stop-color="#00ff18"/><stop offset="0.375" stop-color="#04ff0c"/><stop offset="0.438" stop-color="#25ff04"/><stop offset="0.500" stop-color="#61ff00"/><stop offset="0.562" stop-color="#a0fe00"/><stop offset="0.625" stop-color="#e1f300"/><stop offset="0.688" stop-color="#fcc800"/><stop offset="0.750" stop-color="#ff9900"/><stop offset="0.812" stop-color="#ff7600"/><stop offset="0.875" stop-color="#ff5d00"/><stop offset="0.938" stop-color="#ff4900"/><stop offset="1.000" stop-color="#ff3a00"/></linearGradient><linearGradient id="g32" gradientUnits="userSpaceOnUse" x1="1676" x2="1851" y1="0" y2="0"><stop offset="0.000" stop-color="#00ff4b"/><stop offset="0.062" stop-color="#00ff43"/><stop offset="0.125" stop-color="#00ff3b"/><stop offset="0.188" stop-color="#00ff31"/><stop offset="0.250" stop-color="#00ff27"/><stop offset="0.312" stop-color="#00ff1b"/><stop offset="0.375" stop-color="#05ff0f"/><stop offset="0.438" stop-color="#28ff05"/><stop offset="0.500" stop-color="#65ff01"/><stop offset="0.562" stop-color="#a6fe00"/><stop offset="0.625" stop-color="#e6f000"/><stop offset="0.688" stop-color="#fdc200"/><stop offset="0.750" stop-color="#ff9300"/><stop offset="0.812" stop-color="#ff7200"/><stop offset="0.875" stop-color="#ff5900"/><stop offset="0.938" stop-color="#ff4600"/><stop offset="1.000" stop-color="#ff3800"/></linearGradient><linearGradient id="g33" gradientUnits="userSpaceOnUse" x1="1676" x2="1851" y1="0" y2="0"><stop offset="0.000" stop-color="#00ff4e"/><stop offset="0.062" stop-color="#00ff47"/><stop offset="0.125" stop-color="#00ff3e"/><stop offset="0.188" stop-color="#00ff35"/><stop offset="0.250" stop-color="#00ff2a"/><stop offset="0.312" stop-color="#00ff1f"/><stop offset="0.375" stop-color="#06ff12"/><stop offset="0.438" stop-color="#2bff07"/><stop offset="0.500" stop-color="#6bff01"/><stop offset="0.562" stop-color="#acfe00"/><stop offset="0.625" stop-color="#eaec00"/><stop offset="0.688" stop-color="#febc00"/><stop offset="0.750" stop-color="#ff8e00"/><stop offset="0.812" stop-color="#ff6d00"/><stop offset="0.875" stop-color="#ff5600"/><stop offset="0.938" stop-color="#ff4300"/><stop offset="1.000" stop-color="#ff3500"/></linearGradient><linearGradient id="g34" gradientUnits="userSpaceOnUse" x1="1676" x2="1851" y1="0" y2="0"><stop offset="0.000" stop-color="#00ff52"/><stop offset="0.062" stop-color="#00ff4a"/><stop offset="0.125" stop-color="#00ff42"/><stop offset="0.188" stop-color="#00ff38"/><stop offset="0.250" stop-color="#00ff2e"/><stop offset="0.312" stop-color="#00ff22"/><stop offset="0.375" stop-color="#07ff16"/><stop offset="0.438" stop-color="#2fff09"/><stop offset="0.500" stop-color="#70ff02"/><stop offset="0.562" stop-color="#b3fd00"/><stop offset="0.625" stop-color="#eee800"/><stop offset="0.688" stop-color="#feb600"/><stop offset="0.750" stop-color="#ff8900"/><stop offset="0.812" stop-color="#ff6900"/><stop offset="0.875" stop-color="#ff5200"/><stop offset="0.938" stop-color="#ff4100"/><stop offset="1.000" stop-color="#ff3300"/></linearGradient><linearGradient id="g35" gradientUnits="userSpaceOnUse" x1="1676" x2="1851" y1="0" y2="0"><stop offset="0.000" stop-color="#00ff56"/><stop offset="0.062" stop-color="#00ff4e"/><stop offset="0.125" stop-color="#00ff45"/><stop offset="0.188" stop-color="#00ff3c"/><stop offset="0.250" stop-color="#00ff32"/><stop offset="0.312" stop-color="#00ff26"/><stop offset="0.375" stop-color="#08ff19"/><stop offset="0.438" stop-color="#32ff0c"/><stop offset="0.500" stop-color="#76ff03"/><stop offset="0.562" stop-color="#bafc00"/><stop offset="0.625" stop-color="#f1e300"/><stop offset="0.688" stop-color="#feaf00"/><stop offset="0.750" stop-color="#ff8400"/><stop offset="0.812" stop-color="#ff6500"/><stop offset="0.875" stop-color="#ff4f00"/><stop offset="0.938" stop-color="#ff3e00"/><stop offset="1.000" stop-color="#ff3000"/></linearGradient><linearGradient id="g36" gradientUnits="userSpaceOnUse" x1="1676" x2="1851" y1="0" y2="0"><stop offset="0.000" stop-color="#00ff59"/><stop offset="0.062" stop-color="#00ff52"/><stop offset="0.125" stop-color="#00ff49"/><stop offset="0.188" stop-color="#00ff40"/><stop offset="0.250" stop-color="#00ff36"/><stop offset="0.312" stop-color="#00ff2a"/><stop offset="0.375" stop-color="#09ff1d"/><stop offset="0.438" stop-color="#36ff10"/><stop offset="0.500" stop-color="#7bff05"/><stop offset="0.562" stop-color="#c0fb01"/><stop offset="0.625" stop-color="#f4de00"/><stop offset="0.688" stop-color="#ffa900"/><stop offset="0.750" stop-color="#ff7f00"/><stop offset="0.812" stop-color="#ff6100"/><stop offset="0.875" stop-color="#ff4c00"/><stop offset="0.938" stop-color="#ff3b00"/><stop offset="1.000" stop-color="#ff2e00"/></linearGradient><linearGradient id="g37" gradientUnits="userSpaceOnUse" x1="1676" x2="1851" y1="0" y2="0"><stop offset="0.000" stop-color="#00ff5d"/><stop offset="0.062" stop-color="#00ff55"/><stop offset="0.125" stop-color="#00ff4d"/><stop offset="0.188" stop-color="#00ff44"/><stop offset="0.250" stop-color="#00ff3a"/><stop offset="0.312" stop-color="#00ff2e"/><stop offset="0.375" stop-color="#0bff21"/><stop offset="0.438" stop-color="#3aff13"/><stop offset="0.500" stop-color="#81ff07"/><stop offset="0.562" stop-color="#c7fa01"/><stop offset="0.625" stop-color="#f6d800"/><stop offset="0.688" stop-color="#ffa300"/><stop offset="0.750" stop-color="#ff7a00"/><stop offset="0.812" stop-color="#ff5d00"/><stop offset="0.875" stop-color="#ff4800"/><stop offset="0.938" stop-color="#ff3800"/><stop offset="1.000" stop-color="#ff2b00"/></linearGradient><linearGradient id="g38" gradientUnits="userSpaceOnUse" x1="1676" x2="1851" y1="0" y2="0"><stop offset="0.000" stop-color="#00ff61"/><stop offset="0.062" stop-color="#00ff59"/><stop offset="0.125" stop-color="#00ff51"/><stop offset="0.188" stop-color="#00ff48"/><stop offset="0.250" stop-color="#00ff3e"/><stop offset="0.312" stop-color="#00ff32"/><stop offset="0.375" stop-color="#0cff25"/><stop offset="0.438" stop-color="#3eff17"/><stop offset="0.500" stop-color="#88ff0a"/><stop offset="0.562" stop-color="#cdf802"/><stop offset="0.625" stop-color="#f8d200"/><stop offset="0.688" stop-color="#ff9d00"/><stop offset="0.750" stop-color="#ff7500"/><stop offset="0.812" stop-color="#ff5a00"/><stop offset="0.875" stop-color="#ff4500"/><stop offset="0.938" stop-color="#ff3500"/><stop offset="1.000" stop-color="#ff2900"/></linearGradient><linearGradient id="g39" gradientUnits="userSpaceOnUse" x1="1676" x2="1851" y1="0" y2="0"><stop offset="0.000" stop-color="#00ff65"/><stop offset="0.062" stop-color="#00ff5e"/><stop offset="0.125" stop-color="#00ff55"/><stop offset="0.188" stop-color="#00ff4c"/><stop offset="0.250" stop-color="#00ff42"/><stop offset="0.312" stop-color="#01ff37"/><stop offset="0.375" stop-color="#0eff2a"/><stop offset="0.438" stop-color="#43ff1b"/><stop offset="0.500" stop-color="#8eff0d"/><stop offset="0.562" stop-color="#d3f604"/><stop offset="0.625" stop-color="#facc00"/><stop offset="0.688" stop-color="#ff9700"/><stop offset="0.750" stop-color="#ff7000"/><stop offset="0.812" stop-color="#ff5600"/><stop offset="0.875" stop-color="#ff4200"/><stop offset="0.938" stop-color="#ff3300"/><stop offset="1.000" stop-color="#ff2600"/></linearGradient><linearGradient id="g40" gradientUnits="userSpaceOnUse" x1="1676" x2="1851" y1="0" y2="0"><stop offset="0.000" stop-color="#00ff69"/><stop offset="0.062" stop-color="#00ff62"/><stop offset="0.125" stop-color="#00ff5a"/><stop offset="0.188" stop-color="#00ff51"/><stop offset="0.250" stop-color="#00ff47"/><stop offset="0.312" stop-color="#01ff3b"/><stop offset="0.375" stop-color="#10ff2e"/><stop offset="0.438" stop-color="#48ff20"/><stop offset="0.500" stop-color="#95fe10"/><stop offset="0.562" stop-color="#d9f305"/><stop offset="0.625" stop-color="#fbc501"/><stop offset="0.688" stop-color="#ff9100"/><stop offset="0.750" stop-color="#ff6c00"/><stop offset="0.812" stop-color="#ff5200"/><stop offset="0.875" stop-color="#ff3f00"/><stop offset="0.938" stop-color="#ff3000"/><stop offset="1.000" stop-color="#ff2400"/></linearGradient><linearGradient id="g41" gradientUnits="userSpaceOnUse" x1="1676" x2="1851" y1="0" y2="0"><stop offset="0.000" stop-color="#00ff6e"/><stop offset="0.062" stop-color="#00ff66"/><stop offset="0.125" stop-color="#00ff5e"/><stop offset="0.188" stop-color="#00ff55"/><stop offset="0.250" stop-color="#00ff4b"/><stop offset="0.312" stop-color="#01ff40"/><stop offset="0.375" stop-color="#12ff33"/><stop offset="0.438" stop-color="#4dff24"/><stop offset="0.500" stop-color="#9cfe14"/><stop offset="0.562" stop-color="#dff008"/><stop offset="0.625" stop-color="#fcbe01"/><stop offset="0.688" stop-color="#ff8b00"/><stop offset="0.750" stop-color="#ff6700"/><stop offset="0.812" stop-color="#ff4e00"/><stop offset="0.875" stop-color="#ff3c00"/><stop offset="0.938" stop-color="#ff2d00"/><stop offset="1.000" stop-color="#ff2200"/></linearGradient><linearGradient id="g42" gradientUnits="userSpaceOnUse" x1="1676" x2="1851" y1="0" y2="0"><stop offset="0.000" stop-color="#00ff72"/><stop offset="0.062" stop-color="#00ff6b"/><stop offset="0.125" stop-color="#00ff63"/><stop offset="0.188" stop-color="#00ff5a"/><stop offset="0.250" stop-color="#00ff50"/><stop offset="0.312" stop-color="#01ff45"/><stop offset="0.375" stop-color="#14ff38"/><stop offset="0.438" stop-color="#52ff29"/><stop offset="0.500" stop-color="#a3fd19"/><stop offset="0.562" stop-color="#e4ec0a"/><stop offset="0.625" stop-color="#fdb702"/><stop offset="0.688" stop-color="#ff8500"/><stop offset="0.750" stop-color="#ff6300"/><stop offset="0.812" stop-color="#ff4b00"/><stop offset="0.875" stop-color="#ff3800"/><stop offset="0.938" stop-color="#ff2a00"/><stop offset="1.000" stop-color="#ff1f00"/></linearGradient><linearGradient id="g43" gradientUnits="userSpaceOnUse" x1="1676" x2="1851" y1="0" y2="0"><stop offset="0.000" stop-color="#00ff77"/><stop offset="0.062" stop-color="#00ff6f"/><stop offset="0.125" stop-color="#00ff68"/><stop offset="0.188" stop-color="#00ff5f"/><stop offset="0.250" stop-color="#00ff55"/><stop offset="0.312" stop-color="#01ff4a"/><stop offset="0.375" stop-color="#17ff3d"/><stop offset="0.438" stop-color="#57ff2f"/><stop offset="0.500" stop-color="#abfd1e"/><stop offset="0.562" stop-color="#e9e70d"/><stop offset="0.625" stop-color="#feb003"/><stop offset="0.688" stop-color="#ff7f00"/><stop offset="0.750" stop-color="#ff5e00"/><stop offset="0.812" stop-color="#ff4700"/><stop offset="0.875" stop-color="#ff3500"/><stop offset="0.938" stop-color="#ff2800"/><stop offset="1.000" stop-color="#ff1d00"/></linearGradient><linearGradient id="g44" gradientUnits="userSpaceOnUse" x1="1676" x2="1851" y1="0" y2="0"><stop offset="0.000" stop-color="#00ff7b"/><stop offset="0.062" stop-color="#00ff74"/><stop offset="0.125" stop-color="#00ff6d"/><stop offset="0.188" stop-color="#00ff64"/><stop offset="0.250" stop-color="#00ff5a"/><stop offset="0.312" stop-color="#02ff4f"/><stop offset="0.375" stop-color="#1aff43"/><stop offset="0.438" stop-color="#5dff34"/><stop offset="0.500" stop-color="#b2fc23"/><stop offset="0.562" stop-color="#ede211"/><stop offset="0.625" stop-color="#fea904"/><stop offset="0.688" stop-color="#ff7a00"/><stop offset="0.750" stop-color="#ff5a00"/><stop offset="0.812" stop-color="#ff4300"/><stop offset="0.875" stop-color="#ff3200"/><stop offset="0.938" stop-color="#ff2500"/><stop offset="1.000" stop-color="#ff1b00"/></linearGradient><linearGradient id="g45" gradientUnits="userSpaceOnUse" x1="1676" x2="1851" y1="0" y2="0"><stop offset="0.000" stop-color="#00ff80"/><stop offset="0.062" stop-color="#00ff79"/><stop offset="0.125" stop-color="#00ff72"/><stop offset="0.188" stop-color="#00ff69"/><stop offset="0.250" stop-color="#00ff60"/><stop offset="0.312" stop-color="#02ff55"/><stop offset="0.375" stop-color="#1dff49"/><stop offset="0.438" stop-color="#63ff3a"/><stop offset="0.500" stop-color="#b9fa28"/><stop offset="0.562" stop-color="#f0dc15"/><stop offset="0.625" stop-color="#fea205"/><stop offset="0.688" stop-color="#ff7401"/><stop offset="0.750" stop-color="#ff5600"/><stop offset="0.812" stop-color="#ff4000"/><stop offset="0.875" stop-color="#ff2f00"/><stop offset="0.938" stop-color="#ff2300"/><stop offset="1.000" stop-color="#ff1800"/></linearGradient><linearGradient id="g46" gradientUnits="userSpaceOnUse" x1="1676" x2="1851" y1="0" y2="0"><stop offset="0.000" stop-color="#00ff85"/><stop offset="0.062" stop-color="#00ff7f"/><stop offset="0.125" stop-color="#00ff77"/><stop offset="0.188" stop-color="#00ff6f"/><stop offset="0.250" stop-color="#00ff66"/><stop offset="0.312" stop-color="#02ff5b"/><stop offset="0.375" stop-color="#20ff4f"/><stop offset="0.438" stop-color="#6aff40"/><stop offset="0.500" stop-color="#c1f82e"/><stop offset="0.562" stop-color="#f4d619"/><stop offset="0.625" stop-color="#ff9b07"/><stop offset="0.688" stop-color="#ff6f01"/><stop offset="0.750" stop-color="#ff5200"/><stop offset="0.812" stop-color="#ff3c00"/><stop offset="0.875" stop-color="#ff2c00"/><stop offset="0.938" stop-color="#ff2000"/><stop offset="1.000" stop-color="#ff1600"/></linearGradient><linearGradient id="g47" gradientUnits="userSpaceOnUse" x1="1676" x2="1851" y1="0" y2="0"><stop offset="0.000" stop-color="#00ff8a"/><stop offset="0.062" stop-color="#00ff84"/><stop offset="0.125" stop-color="#00ff7d"/><stop offset="0.188" stop-color="#00ff75"/><stop offset="0.250" stop-color="#00ff6c"/><stop offset="0.312" stop-color="#03ff61"/><stop offset="0.375" stop-color="#24ff55"/><stop offset="0.438" stop-color="#71ff47"/><stop offset="0.500" stop-color="#c8f634"/><stop offset="0.562" stop-color="#f6cf1d"/><stop offset="0.625" stop-color="#ff9409"/><stop offset="0.688" stop-color="#ff6a02"/><stop offset="0.750" stop-color="#ff4d00"/><stop offset="0.812" stop-color="#ff3900"/><stop offset="0.875" stop-color="#ff2a00"/><stop offset="0.938" stop-color="#ff1e00"/><stop offset="1.000" stop-color="#ff1400"/></linearGradient><linearGradient id="g48" gradientUnits="userSpaceOnUse" x1="1676" x2="1851" y1="0" y2="0"><stop offset="0.000" stop-color="#00ff90"/><stop offset="0.062" stop-color="#00ff89"/><stop offset="0.125" stop-color="#00ff83"/><stop offset="0.188" stop-color="#00ff7b"/><stop offset="0.250" stop-color="#00ff72"/><stop offset="0.312" stop-color="#04ff68"/><stop offset="0.375" stop-color="#28ff5c"/><stop offset="0.438" stop-color="#78ff4e"/><stop offset="0.500" stop-color="#cff33a"/><stop offset="0.562" stop-color="#f8c821"/><stop offset="0.625" stop-color="#ff8d0c"/><stop offset="0.688" stop-color="#ff6502"/><stop offset="0.750" stop-color="#ff4900"/><stop offset="0.812" stop-color="#ff3600"/><stop offset="0.875" stop-color="#ff2700"/><stop offset="0.938" stop-color="#ff1b00"/><stop offset="1.000" stop-color="#ff1200"/></linearGradient><linearGradient id="g49" gradientUnits="userSpaceOnUse" x1="1676" x2="1851" y1="0" y2="0"><stop offset="0.000" stop-color="#00ff95"/><stop offset="0.062" stop-color="#00ff8f"/><stop offset="0.125" stop-color="#00ff89"/><stop offset="0.188" stop-color="#00ff81"/><stop offset="0.250" stop-color="#00ff78"/><stop offset="0.312" stop-color="#04ff6e"/><stop offset="0.375" stop-color="#2cff63"/><stop offset="0.438" stop-color="#7ffe56"/><stop offset="0.500" stop-color="#d6f041"/><stop offset="0.562" stop-color="#fac026"/><stop offset="0.625" stop-color="#ff870e"/><stop offset="0.688" stop-color="#ff6003"/><stop offset="0.750" stop-color="#ff4500"/><stop offset="0.812" stop-color="#ff3200"/><stop offset="0.875" stop-color="#ff2400"/><stop offset="0.938" stop-color="#ff1900"/><stop offset="1.000" stop-color="#ff1000"/></linearGradient><linearGradient id="g50" gradientUnits="userSpaceOnUse" x1="1676" x2="1851" y1="0" y2="0"><stop offset="0.000" stop-color="#00ff9b"/><stop offset="0.062" stop-color="#00ff95"/><stop offset="0.125" stop-color="#00ff8f"/><stop offset="0.188" stop-color="#00ff87"/><stop offset="0.250" stop-color="#00ff7f"/><stop offset="0.312" stop-color="#05ff76"/><stop offset="0.375" stop-color="#31ff6b"/><stop offset="0.438" stop-color="#88fe5e"/><stop offset="0.500" stop-color="#dcec47"/><stop offset="0.562" stop-color="#fbb92a"/><stop offset="0.625" stop-color="#ff8011"/><stop offset="0.688" stop-color="#ff5b05"/><stop offset="0.750" stop-color="#ff4101"/><stop offset="0.812" stop-color="#ff2f00"/><stop offset="0.875" stop-color="#ff2100"/><stop offset="0.938" stop-color="#ff1600"/><stop offset="1.000" stop-color="#ff0d00"/></linearGradient><linearGradient id="g51" gradientUnits="userSpaceOnUse" x1="1676" x2="1851" y1="0" y2="0"><stop offset="0.000" stop-color="#00ffa1"/><stop offset="0.062" stop-color="#00ff9b"/><stop offset="0.125" stop-color="#00ff95"/><stop offset="0.188" stop-color="#00ff8e"/><stop offset="0.250" stop-color="#00ff86"/><stop offset="0.312" stop-color="#07ff7d"/><stop offset="0.375" stop-color="#37ff73"/><stop offset="0.438" stop-color="#90fe67"/><stop offset="0.500" stop-color="#e2e74e"/><stop offset="0.562" stop-color="#fcb12e"/><stop offset="0.625" stop-color="#ff7a14"/><stop offset="0.688" stop-color="#ff5606"/><stop offset="0.750" stop-color="#ff3d01"/><stop offset="0.812" stop-color="#ff2c00"/><stop offset="0.875" stop-color="#ff1e00"/><stop offset="0.938" stop-color="#ff1400"/><stop offset="1.000" stop-color="#ff0b00"/></linearGradient><linearGradient id="g52" gradientUnits="userSpaceOnUse" x1="1676" x2="1851" y1="0" y2="0"><stop offset="0.000" stop-color="#00ffa7"/><stop offset="0.062" stop-color="#00ffa2"/><stop offset="0.125" stop-color="#00ff9c"/><stop offset="0.188" stop-color="#00ff95"/><stop offset="0.250" stop-color="#00ff8e"/><stop offset="0.312" stop-color="#08ff85"/><stop offset="0.375" stop-color="#3dff7c"/><stop offset="0.438" stop-color="#99fd71"/><stop offset="0.500" stop-color="#e7e255"/><stop offset="0.562" stop-color="#fda932"/><stop offset="0.625" stop-color="#ff7417"/><stop offset="0.688" stop-color="#ff5108"/><stop offset="0.750" stop-color="#ff3a01"/><stop offset="0.812" stop-color="#ff2900"/><stop offset="0.875" stop-color="#ff1c00"/><stop offset="0.938" stop-color="#ff1100"/><stop offset="1.000" stop-color="#ff0900"/></linearGradient><linearGradient id="g53" gradientUnits="userSpaceOnUse" x1="1676" x2="1851" y1="0" y2="0"><stop offset="0.000" stop-color="#00ffae"/><stop offset="0.062" stop-color="#00ffa9"/><stop offset="0.125" stop-color="#00ffa3"/><stop offset="0.188" stop-color="#00ff9d"/><stop offset="0.250" stop-color="#00ff95"/><stop offset="0.312" stop-color="#0aff8d"/><stop offset="0.375" stop-color="#44ff86"/><stop offset="0.438" stop-color="#a2fc7b"/><stop offset="0.500" stop-color="#ecdd5d"/><stop offset="0.562" stop-color="#fea137"/><stop offset="0.625" stop-color="#ff6d1a"/><stop offset="0.688" stop-color="#ff4c0a"/><stop offset="0.750" stop-color="#ff3602"/><stop offset="0.812" stop-color="#ff2500"/><stop offset="0.875" stop-color="#ff1900"/><stop offset="0.938" stop-color="#ff0f00"/><stop offset="1.000" stop-color="#ff0800"/></linearGradient><linearGradient id="g54" gradientUnits="userSpaceOnUse" x1="1676" x2="1851" y1="0" y2="0"><stop offset="0.000" stop-color="#00ffb4"/><stop offset="0.062" stop-color="#00ffb0"/><stop offset="0.125" stop-color="#00ffaa"/><stop offset="0.188" stop-color="#00ffa4"/><stop offset="0.250" stop-color="#00ff9e"/><stop offset="0.312" stop-color="#0cff96"/><stop offset="0.375" stop-color="#4cff90"/><stop offset="0.438" stop-color="#acfb86"/><stop offset="0.500" stop-color="#f0d764"/><stop offset="0.562" stop-color="#fe9a3b"/><stop offset="0.625" stop-color="#ff681d"/><stop offset="0.688" stop-color="#ff480c"/><stop offset="0.750" stop-color="#ff3203"/><stop offset="0.812" stop-color="#ff2200"/><stop offset="0.875" stop-color="#ff1600"/><stop offset="0.938" stop-color="#ff0d00"/><stop offset="1.000" stop-color="#ff0600"/></linearGradient><linearGradient id="g55" gradientUnits="userSpaceOnUse" x1="1676" x2="1851" y1="0" y2="0"><stop offset="0.000" stop-color="#00ffbb"/><stop offset="0.062" stop-color="#00ffb7"/><stop offset="0.125" stop-color="#00ffb2"/><stop offset="0.188" stop-color="#00ffad"/><stop offset="0.250" stop-color="#01ffa6"/><stop offset="0.312" stop-color="#0fffa0"/><stop offset="0.375" stop-color="#54ff9b"/><stop offset="0.438" stop-color="#b6fa92"/><stop offset="0.500" stop-color="#f3d16c"/><stop offset="0.562" stop-color="#fe933f"/><stop offset="0.625" stop-color="#ff6220"/><stop offset="0.688" stop-color="#ff430e"/><stop offset="0.750" stop-color="#ff2e04"/><stop offset="0.812" stop-color="#ff1f01"/><stop offset="0.875" stop-color="#ff1400"/><stop offset="0.938" stop-color="#ff0b00"/><stop offset="1.000" stop-color="#ff0400"/></linearGradient><linearGradient id="g56" gradientUnits="userSpaceOnUse" x1="1676" x2="1851" y1="0" y2="0"><stop offset="0.000" stop-color="#00ffc2"/><stop offset="0.062" stop-color="#00ffbf"/><stop offset="0.125" stop-color="#00ffba"/><stop offset="0.188" stop-color="#00ffb5"/><stop offset="0.250" stop-color="#01ffaf"/><stop offset="0.312" stop-color="#12ffaa"/><stop offset="0.375" stop-color="#5effa7"/><stop offset="0.438" stop-color="#c0f89e"/><stop offset="0.500" stop-color="#f6cb74"/><stop offset="0.562" stop-color="#ff8c44"/><stop offset="0.625" stop-color="#ff5c23"/><stop offset="0.688" stop-color="#ff3f11"/><stop offset="0.750" stop-color="#ff2b06"/><stop offset="0.812" stop-color="#ff1c01"/><stop offset="0.875" stop-color="#ff1100"/><stop offset="0.938" stop-color="#ff0900"/><stop offset="1.000" stop-color="#ff0300"/></linearGradient><linearGradient id="g57" gradientUnits="userSpaceOnUse" x1="1676" x2="1851" y1="0" y2="0"><stop offset="0.000" stop-color="#00ffca"/><stop offset="0.062" stop-color="#00ffc6"/><stop offset="0.125" stop-color="#00ffc2"/><stop offset="0.188" stop-color="#00ffbe"/><stop offset="0.250" stop-color="#01ffb9"/><stop offset="0.312" stop-color="#15ffb4"/><stop offset="0.375" stop-color="#68ffb3"/><stop offset="0.438" stop-color="#c9f7ab"/><stop offset="0.500" stop-color="#f9c57d"/><stop offset="0.562" stop-color="#ff8549"/><stop offset="0.625" stop-color="#ff5726"/><stop offset="0.688" stop-color="#ff3b13"/><stop offset="0.750" stop-color="#ff2707"/><stop offset="0.812" stop-color="#ff1901"/><stop offset="0.875" stop-color="#ff0e00"/><stop offset="0.938" stop-color="#ff0700"/><stop offset="1.000" stop-color="#ff0200"/></linearGradient><linearGradient id="g58" gradientUnits="userSpaceOnUse" x1="1676" x2="1851" y1="0" y2="0"><stop offset="0.000" stop-color="#00ffd1"/><stop offset="0.062" stop-color="#00ffce"/><stop offset="0.125" stop-color="#00fecb"/><stop offset="0.188" stop-color="#00fec7"/><stop offset="0.250" stop-color="#01fec3"/><stop offset="0.312" stop-color="#19febf"/><stop offset="0.375" stop-color="#73febf"/><stop offset="0.438" stop-color="#d2f6b7"/><stop offset="0.500" stop-color="#fac085"/><stop offset="0.562" stop-color="#ff7f4d"/><stop offset="0.625" stop-color="#ff5129"/><stop offset="0.688" stop-color="#ff3615"/><stop offset="0.750" stop-color="#ff2409"/><stop offset="0.812" stop-color="#ff1602"/><stop offset="0.875" stop-color="#ff0c00"/><stop offset="0.938" stop-color="#ff0500"/><stop offset="1.000" stop-color="#ff0100"/></linearGradient><linearGradient id="g59" gradientUnits="userSpaceOnUse" x1="1676" x2="1851" y1="0" y2="0"><stop offset="0.000" stop-color="#00fed9"/><stop offset="0.062" stop-color="#00fed6"/><stop offset="0.125" stop-color="#00fed3"/><stop offset="0.188" stop-color="#00fed0"/><stop offset="0.250" stop-color="#02fecc"/><stop offset="0.312" stop-color="#1dfec9"/><stop offset="0.375" stop-color="#7efecb"/><stop offset="0.438" stop-color="#daf4c3"/><stop offset="0.500" stop-color="#fcbc8e"/><stop offset="0.562" stop-color="#ff7a52"/><stop offset="0.625" stop-color="#ff4c2c"/><stop offset="0.688" stop-color="#ff3218"/><stop offset="0.750" stop-color="#ff200b"/><stop offset="0.812" stop-color="#ff1303"/><stop offset="0.875" stop-color="#ff0a00"/><stop offset="0.938" stop-color="#ff0400"/><stop offset="1.000" stop-color="#ff0100"/></linearGradient><linearGradient id="g60" gradientUnits="userSpaceOnUse" x1="1676" x2="1851" y1="0" y2="0"><stop offset="0.000" stop-color="#00fde0"/><stop offset="0.062" stop-color="#00fdde"/><stop offset="0.125" stop-color="#00fddc"/><stop offset="0.188" stop-color="#00fcd9"/><stop offset="0.250" stop-color="#02fcd6"/><stop offset="0.312" stop-color="#21fcd4"/><stop offset="0.375" stop-color="#88fdd6"/><stop offset="0.438" stop-color="#e2f3ce"/><stop offset="0.500" stop-color="#fdb996"/><stop offset="0.562" stop-color="#ff7557"/><stop offset="0.625" stop-color="#ff472f"/><stop offset="0.688" stop-color="#ff2e1a"/><stop offset="0.750" stop-color="#ff1d0c"/><stop offset="0.812" stop-color="#ff1104"/><stop offset="0.875" stop-color="#ff0801"/><stop offset="0.938" stop-color="#ff0300"/><stop offset="1.000" stop-color="#ff0100"/></linearGradient><linearGradient id="g61" gradientUnits="userSpaceOnUse" x1="1676" x2="1851" y1="0" y2="0"><stop offset="0.000" stop-color="#00fbe7"/><stop offset="0.062" stop-color="#00fbe6"/><stop offset="0.125" stop-color="#00fbe4"/><stop offset="0.188" stop-color="#00fae2"/><stop offset="0.250" stop-color="#02fadf"/><stop offset="0.312" stop-color="#26fade"/><stop offset="0.375" stop-color="#92fbe0"/><stop offset="0.438" stop-color="#e8f2d8"/><stop offset="0.500" stop-color="#feb69e"/><stop offset="0.562" stop-color="#ff705b"/><stop offset="0.625" stop-color="#ff4232"/><stop offset="0.688" stop-color="#ff2a1c"/><stop offset="0.750" stop-color="#ff1a0e"/><stop offset="0.812" stop-color="#ff0e05"/><stop offset="0.875" stop-color="#ff0601"/><stop offset="0.938" stop-color="#ff0200"/><stop offset="1.000" stop-color="#ff0000"/></linearGradient><linearGradient id="g62" gradientUnits="userSpaceOnUse" x1="1676" x2="1851" y1="0" y2="0"><stop offset="0.000" stop-color="#00f9ed"/><stop offset="0.062" stop-color="#00f8ec"/><stop offset="0.125" stop-color="#00f8eb"/><stop offset="0.188" stop-color="#00f7e9"/><stop offset="0.250" stop-color="#03f6e8"/><stop offset="0.312" stop-color="#2af6e7"/><stop offset="0.375" stop-color="#9bf9e9"/><stop offset="0.438" stop-color="#edf1e0"/><stop offset="0.500" stop-color="#feb3a5"/><stop offset="0.562" stop-color="#ff6b5f"/><stop offset="0.625" stop-color="#ff3d34"/><stop offset="0.688" stop-color="#ff261f"/><stop offset="0.750" stop-color="#ff1610"/><stop offset="0.812" stop-color="#ff0b07"/><stop offset="0.875" stop-color="#ff0401"/><stop offset="0.938" stop-color="#ff0100"/><stop offset="1.000" stop-color="#ff0000"/></linearGradient><linearGradient id="g63" gradientUnits="userSpaceOnUse" x1="1676" x2="1851" y1="0" y2="0"><stop offset="0.000" stop-color="#00f5f3"/><stop offset="0.062" stop-color="#00f4f2"/><stop offset="0.125" stop-color="#00f3f1"/><stop offset="0.188" stop-color="#00f2f0"/><stop offset="0.250" stop-color="#03f1ef"/><stop offset="0.312" stop-color="#2ef1ee"/><stop offset="0.375" stop-color="#a2f5f0"/><stop offset="0.438" stop-color="#f0efe7"/><stop offset="0.500" stop-color="#feb1ab"/><stop offset="0.562" stop-color="#ff6663"/><stop offset="0.625" stop-color="#ff3837"/><stop offset="0.688" stop-color="#ff2221"/><stop offset="0.750" stop-color="#ff1312"/><stop offset="0.812" stop-color="#ff0908"/><stop offset="0.875" stop-color="#ff0302"/><stop offset="0.938" stop-color="#ff0100"/><stop offset="1.000" stop-color="#ff0000"/></linearGradient><linearGradient id="g64" gradientUnits="userSpaceOnUse" x1="1676" x2="1851" y1="0" y2="0"><stop offset="0.000" stop-color="#00f0f7"/><stop offset="0.062" stop-color="#00eff6"/><stop offset="0.125" stop-color="#00eef6"/><stop offset="0.188" stop-color="#00ecf5"/><stop offset="0.250" stop-color="#04eaf4"/><stop offset="0.312" stop-color="#32eaf4"/><stop offset="0.375" stop-color="#a8f0f5"/><stop offset="0.438" stop-color="#f3edec"/><stop offset="0.500" stop-color="#ffadb0"/><stop offset="0.562" stop-color="#ff6167"/><stop offset="0.625" stop-color="#ff3439"/><stop offset="0.688" stop-color="#ff1e23"/><stop offset="0.750" stop-color="#ff1014"/><stop offset="0.812" stop-color="#ff070a"/><stop offset="0.875" stop-color="#ff0203"/><stop offset="0.938" stop-color="#ff0000"/><stop offset="1.000" stop-color="#ff0000"/></linearGradient><linearGradient id="g65" gradientUnits="userSpaceOnUse" x1="1676" x2="1851" y1="0" y2="0"><stop offset="0.000" stop-color="#00eafa"/><stop offset="0.062" stop-color="#00e9fa"/><stop offset="0.125" stop-color="#00e7f9"/><stop offset="0.188" stop-color="#00e4f9"/><stop offset="0.250" stop-color="#04e2f9"/><stop offset="0.312" stop-color="#35e2f8"/><stop offset="0.375" stop-color="#aceaf9"/><stop offset="0.438" stop-color="#f5e9ef"/><stop offset="0.500" stop-color="#ffa9b3"/><stop offset="0.562" stop-color="#ff5c6a"/><stop offset="0.625" stop-color="#ff2f3c"/><stop offset="0.688" stop-color="#ff1a25"/><stop offset="0.750" stop-color="#ff0d16"/><stop offset="0.812" stop-color="#ff050b"/><stop offset="0.875" stop-color="#ff0104"/><stop offset="0.938" stop-color="#ff0001"/><stop offset="1.000" stop-color="#ff0000"/></linearGradient><linearGradient id="g66" gradientUnits="userSpaceOnUse" x1="1676" x2="1851" y1="0" y2="0"><stop offset="0.000" stop-color="#00e3fc"/><stop offset="0.062" stop-color="#00e1fc"/><stop offset="0.125" stop-color="#00dffc"/><stop offset="0.188" stop-color="#00dcfc"/><stop offset="0.250" stop-color="#04d9fb"/><stop offset="0.312" stop-color="#37d8fb"/><stop offset="0.375" stop-color="#afe3fb"/><stop offset="0.438" stop-color="#f6e4f0"/><stop offset="0.500" stop-color="#ffa4b5"/><stop offset="0.562" stop-color="#ff576c"/><stop offset="0.625" stop-color="#ff2a3e"/><stop offset="0.688" stop-color="#ff1727"/><stop offset="0.750" stop-color="#ff0b18"/><stop offset="0.812" stop-color="#ff040d"/><stop offset="0.875" stop-color="#ff0105"/><stop offset="0.938" stop-color="#ff0001"/><stop offset="1.000" stop-color="#ff0000"/></linearGradient><linearGradient id="g67" gradientUnits="userSpaceOnUse" x1="1676" x2="1851" y1="0" y2="0"><stop offset="0.000" stop-color="#00dcfe"/><stop offset="0.062" stop-color="#00d9fd"/><stop offset="0.125" stop-color="#00d6fd"/><stop offset="0.188" stop-color="#00d2fd"/><stop offset="0.250" stop-color="#05cefd"/><stop offset="0.312" stop-color="#39cefd"/><stop offset="0.375" stop-color="#b0d9fd"/><stop offset="0.438" stop-color="#f6dcf1"/><stop offset="0.500" stop-color="#ff9cb5"/><stop offset="0.562" stop-color="#ff516e"/><stop offset="0.625" stop-color="#ff2640"/><stop offset="0.688" stop-color="#ff1329"/><stop offset="0.750" stop-color="#ff081a"/><stop offset="0.812" stop-color="#ff020f"/><stop offset="0.875" stop-color="#ff0006"/><stop offset="0.938" stop-color="#ff0002"/><stop offset="1.000" stop-color="#ff0000"/></linearGradient><linearGradient id="g68" gradientUnits="userSpaceOnUse" x1="1676" x2="1851" y1="0" y2="0"><stop offset="0.000" stop-color="#00d4fe"/><stop offset="0.062" stop-color="#00d1fe"/><stop offset="0.125" stop-color="#00cdfe"/><stop offset="0.188" stop-color="#00c9fe"/><stop offset="0.250" stop-color="#05c4fe"/><stop offset="0.312" stop-color="#3bc2fe"/><stop offset="0.375" stop-color="#b0cffe"/><stop offset="0.438" stop-color="#f6d3f0"/><stop offset="0.500" stop-color="#ff93b4"/><stop offset="0.562" stop-color="#ff4a6f"/><stop offset="0.625" stop-color="#ff2143"/><stop offset="0.688" stop-color="#ff102c"/><stop offset="0.750" stop-color="#ff061c"/><stop offset="0.812" stop-color="#ff0210"/><stop offset="0.875" stop-color="#ff0007"/><stop offset="0.938" stop-color="#ff0002"/><stop offset="1.000" stop-color="#ff0000"/></linearGradient><linearGradient id="g69" gradientUnits="userSpaceOnUse" x1="1676" x2="1851" y1="0" y2="0"><stop offset="0.000" stop-color="#00ccff"/><stop offset="0.062" stop-color="#00c8ff"/><stop offset="0.125" stop-color="#00c4ff"/><stop offset="0.188" stop-color="#00bfff"/><stop offset="0.250" stop-color="#05b9ff"/><stop offset="0.312" stop-color="#3cb7ff"/><stop offset="0.375" stop-color="#afc3fe"/><stop offset="0.438" stop-color="#f5c7ef"/><stop offset="0.500" stop-color="#ff89b3"/><stop offset="0.562" stop-color="#ff4370"/><stop offset="0.625" stop-color="#ff1d45"/><stop offset="0.688" stop-color="#ff0d2e"/><stop offset="0.750" stop-color="#ff041e"/><stop offset="0.812" stop-color="#ff0112"/><stop offset="0.875" stop-color="#ff0009"/><stop offset="0.938" stop-color="#ff0003"/><stop offset="1.000" stop-color="#ff0000"/></linearGradient><linearGradient id="g70" gradientUnits="userSpaceOnUse" x1="1676" x2="1851" y1="0" y2="0"><stop offset="0.000" stop-color="#00c4ff"/><stop offset="0.062" stop-color="#00bfff"/><stop offset="0.125" stop-color="#00baff"/><stop offset="0.188" stop-color="#00b5ff"/><stop offset="0.250" stop-color="#06afff"/><stop offset="0.312" stop-color="#3dacff"/><stop offset="0.375" stop-color="#adb7fe"/><stop offset="0.438" stop-color="#f4b8ed"/><stop offset="0.500" stop-color="#ff7db1"/><stop offset="0.562" stop-color="#ff3c71"/><stop offset="0.625" stop-color="#ff1847"/><stop offset="0.688" stop-color="#ff0a30"/><stop offset="0.750" stop-color="#ff0320"/><stop offset="0.812" stop-color="#ff0114"/><stop offset="0.875" stop-color="#ff000a"/><stop offset="0.938" stop-color="#ff0004"/><stop offset="1.000" stop-color="#ff0001"/></linearGradient><linearGradient id="g71" gradientUnits="userSpaceOnUse" x1="1676" x2="1851" y1="0" y2="0"><stop offset="0.000" stop-color="#00bcff"/><stop offset="0.062" stop-color="#00b7ff"/><stop offset="0.125" stop-color="#00b1ff"/><stop offset="0.188" stop-color="#00abff"/><stop offset="0.250" stop-color="#06a4ff"/><stop offset="0.312" stop-color="#3ea0ff"/><stop offset="0.375" stop-color="#aba9fe"/><stop offset="0.438" stop-color="#f3a9eb"/><stop offset="0.500" stop-color="#ff70ae"/><stop offset="0.562" stop-color="#ff3471"/><stop offset="0.625" stop-color="#ff1449"/><stop offset="0.688" stop-color="#ff0732"/><stop offset="0.750" stop-color="#ff0221"/><stop offset="0.812" stop-color="#ff0015"/><stop offset="0.875" stop-color="#ff000c"/><stop offset="0.938" stop-color="#ff0005"/><stop offset="1.000" stop-color="#ff0001"/></linearGradient><linearGradient id="g72" gradientUnits="userSpaceOnUse" x1="1676" x2="1851" y1="0" y2="0"><stop offset="0.000" stop-color="#00b4ff"/><stop offset="0.062" stop-color="#00afff"/><stop offset="0.125" stop-color="#00a9ff"/><stop offset="0.188" stop-color="#00a2ff"/><stop offset="0.250" stop-color="#079aff"/><stop offset="0.312" stop-color="#3f95ff"/><stop offset="0.375" stop-color="#aa9bfe"/><stop offset="0.438" stop-color="#f298ea"/><stop offset="0.500" stop-color="#ff62ac"/><stop offset="0.562" stop-color="#ff2d72"/><stop offset="0.625" stop-color="#ff104b"/><stop offset="0.688" stop-color="#ff0533"/><stop offset="0.750" stop-color="#ff0123"/><stop offset="0.812" stop-color="#ff0017"/><stop offset="0.875" stop-color="#ff000d"/><stop offset="0.938" stop-color="#ff0006"/><stop offset="1.000" stop-color="#ff0002"/></linearGradient><linearGradient id="g73" gradientUnits="userSpaceOnUse" x1="1676" x2="1851" y1="0" y2="0"><stop offset="0.000" stop-color="#00acff"/><stop offset="0.062" stop-color="#00a7ff"/><stop offset="0.125" stop-color="#00a0ff"/><stop offset="0.188" stop-color="#0099ff"/><stop offset="0.250" stop-color="#0890ff"/><stop offset="0.312" stop-color="#408aff"/><stop offset="0.375" stop-color="#a88dfe"/><stop offset="0.438" stop-color="#f187e8"/><stop offset="0.500" stop-color="#ff55aa"/><stop offset="0.562" stop-color="#ff2673"/><stop offset="0.625" stop-color="#ff0d4c"/><stop offset="0.688" stop-color="#ff0435"/><stop offset="0.750" stop-color="#ff0125"/><stop offset="0.812" stop-color="#ff0019"/><stop offset="0.875" stop-color="#ff000f"/><stop offset="0.938" stop-color="#ff0007"/><stop offset="1.000" stop-color="#ff0002"/></linearGradient><linearGradient id="g74" gradientUnits="userSpaceOnUse" x1="1676" x2="1851" y1="0" y2="0"><stop offset="0.000" stop-color="#00a5ff"/><stop offset="0.062" stop-color="#009fff"/><stop offset="0.125" stop-color="#0098ff"/><stop offset="0.188" stop-color="#0090ff"/><stop offset="0.250" stop-color="#0887ff"/><stop offset="0.312" stop-color="#417fff"/><stop offset="0.375" stop-color="#a67ffe"/><stop offset="0.438" stop-color="#f076e7"/><stop offset="0.500" stop-color="#ff48a8"/><stop offset="0.562" stop-color="#ff1f73"/><stop offset="0.625" stop-color="#ff0a4e"/><stop offset="0.688" stop-color="#ff0237"/><stop offset="0.750" stop-color="#ff0027"/><stop offset="0.812" stop-color="#ff001a"/><stop offset="0.875" stop-color="#ff0010"/><stop offset="0.938" stop-color="#ff0008"/><stop offset="1.000" stop-color="#ff0003"/></linearGradient><linearGradient id="g75" gradientUnits="userSpaceOnUse" x1="1676" x2="1851" y1="0" y2="0"><stop offset="0.000" stop-color="#009eff"/><stop offset="0.062" stop-color="#0097ff"/><stop offset="0.125" stop-color="#0090ff"/><stop offset="0.188" stop-color="#0088ff"/><stop offset="0.250" stop-color="#097eff"/><stop offset="0.312" stop-color="#4375ff"/><stop offset="0.375" stop-color="#a572fe"/><stop offset="0.438" stop-color="#f066e6"/><stop offset="0.500" stop-color="#ff3ca7"/><stop offset="0.562" stop-color="#ff1974"/><stop offset="0.625" stop-color="#ff0750"/><stop offset="0.688" stop-color="#ff0139"/><stop offset="0.750" stop-color="#ff0028"/><stop offset="0.812" stop-color="#ff001c"/><stop offset="0.875" stop-color="#ff0012"/><stop offset="0.938" stop-color="#ff000a"/><stop offset="1.000" stop-color="#ff0004"/></linearGradient><linearGradient id="g76" gradientUnits="userSpaceOnUse" x1="1676" x2="1851" y1="0" y2="0"><stop offset="0.000" stop-color="#0097ff"/><stop offset="0.062" stop-color="#0090ff"/><stop offset="0.125" stop-color="#0088ff"/><stop offset="0.188" stop-color="#007fff"/><stop offset="0.250" stop-color="#0a75ff"/><stop offset="0.312" stop-color="#446bff"/><stop offset="0.375" stop-color="#a465fe"/><stop offset="0.438" stop-color="#ef56e5"/><stop offset="0.500" stop-color="#ff31a7"/><stop offset="0.562" stop-color="#ff1375"/><stop offset="0.625" stop-color="#ff0552"/><stop offset="0.688" stop-color="#ff013b"/><stop offset="0.750" stop-color="#ff002a"/><stop offset="0.812" stop-color="#ff001d"/><stop offset="0.875" stop-color="#ff0013"/><stop offset="0.938" stop-color="#ff000b"/><stop offset="1.000" stop-color="#ff0005"/></linearGradient><linearGradient id="g77" gradientUnits="userSpaceOnUse" x1="1676" x2="1851" y1="0" y2="0"><stop offset="0.000" stop-color="#0090ff"/><stop offset="0.062" stop-color="#0089ff"/><stop offset="0.125" stop-color="#0081ff"/><stop offset="0.188" stop-color="#0077ff"/><stop offset="0.250" stop-color="#0b6dff"/><stop offset="0.312" stop-color="#4662ff"/><stop offset="0.375" stop-color="#a459fe"/><stop offset="0.438" stop-color="#ef49e5"/><stop offset="0.500" stop-color="#ff27a7"/><stop offset="0.562" stop-color="#ff0f77"/><stop offset="0.625" stop-color="#ff0354"/><stop offset="0.688" stop-color="#ff003d"/><stop offset="0.750" stop-color="#ff002c"/><stop offset="0.812" stop-color="#ff001f"/><stop offset="0.875" stop-color="#ff0015"/><stop offset="0.938" stop-color="#ff000c"/><stop offset="1.000" stop-color="#ff0006"/></linearGradient><linearGradient id="g78" gradientUnits="userSpaceOnUse" x1="1676" x2="1851" y1="0" y2="0"><stop offset="0.000" stop-color="#0089ff"/><stop offset="0.062" stop-color="#0082ff"/><stop offset="0.125" stop-color="#0079ff"/><stop offset="0.188" stop-color="#0070ff"/><stop offset="0.250" stop-color="#0c65ff"/><stop offset="0.312" stop-color="#4859ff"/><stop offset="0.375" stop-color="#a44efe"/><stop offset="0.438" stop-color="#ee3ce5"/><stop offset="0.500" stop-color="#ff1ea7"/><stop offset="0.562" stop-color="#ff0a78"/><stop offset="0.625" stop-color="#ff0256"/><stop offset="0.688" stop-color="#ff003f"/><stop offset="0.750" stop-color="#ff002e"/><stop offset="0.812" stop-color="#ff0020"/><stop offset="0.875" stop-color="#ff0016"/><stop offset="0.938" stop-color="#ff000e"/><stop offset="1.000" stop-color="#ff0007"/></linearGradient><linearGradient id="g79" gradientUnits="userSpaceOnUse" x1="1676" x2="1851" y1="0" y2="0"><stop offset="0.000" stop-color="#0083ff"/><stop offset="0.062" stop-color="#007bff"/><stop offset="0.125" stop-color="#0072ff"/><stop offset="0.188" stop-color="#0068ff"/><stop offset="0.250" stop-color="#0e5dff"/><stop offset="0.312" stop-color="#4a50ff"/><stop offset="0.375" stop-color="#a443fe"/><stop offset="0.438" stop-color="#ee31e5"/><stop offset="0.500" stop-color="#ff17a8"/><stop offset="0.562" stop-color="#ff0779"/><stop offset="0.625" stop-color="#ff0158"/><stop offset="0.688" stop-color="#ff0040"/><stop offset="0.750" stop-color="#ff002f"/><stop offset="0.812" stop-color="#ff0022"/><stop offset="0.875" stop-color="#ff0017"/><stop offset="0.938" stop-color="#ff000f"/><stop offset="1.000" stop-color="#ff0008"/></linearGradient><linearGradient id="g80" gradientUnits="userSpaceOnUse" x1="1676" x2="1851" y1="0" y2="0"><stop offset="0.000" stop-color="#007dff"/><stop offset="0.062" stop-color="#0074ff"/><stop offset="0.125" stop-color="#006bff"/><stop offset="0.188" stop-color="#0061ff"/><stop offset="0.250" stop-color="#0f55ff"/><stop offset="0.312" stop-color="#4b48ff"/><stop offset="0.375" stop-color="#a43afe"/><stop offset="0.438" stop-color="#ee27e6"/><stop offset="0.500" stop-color="#ff11a9"/><stop offset="0.562" stop-color="#ff057b"/><stop offset="0.625" stop-color="#ff0159"/><stop offset="0.688" stop-color="#ff0042"/><stop offset="0.750" stop-color="#ff0031"/><stop offset="0.812" stop-color="#ff0023"/><stop offset="0.875" stop-color="#ff0019"/><stop offset="0.938" stop-color="#ff0010"/><stop offset="1.000" stop-color="#ff0009"/></linearGradient><linearGradient id="g81" gradientUnits="userSpaceOnUse" x1="1676" x2="1851" y1="0" y2="0"><stop offset="0.000" stop-color="#0076ff"/><stop offset="0.062" stop-color="#006eff"/><stop offset="0.125" stop-color="#0065ff"/><stop offset="0.188" stop-color="#015aff"/><stop offset="0.250" stop-color="#104eff"/><stop offset="0.312" stop-color="#4d40ff"/><stop offset="0.375" stop-color="#a531fe"/><stop offset="0.438" stop-color="#ee1fe6"/><stop offset="0.500" stop-color="#ff0caa"/><stop offset="0.562" stop-color="#ff037d"/><stop offset="0.625" stop-color="#ff005b"/><stop offset="0.688" stop-color="#ff0044"/><stop offset="0.750" stop-color="#ff0032"/><stop offset="0.812" stop-color="#ff0025"/><stop offset="0.875" stop-color="#ff001a"/><stop offset="0.938" stop-color="#ff0012"/><stop offset="1.000" stop-color="#ff000a"/></linearGradient><linearGradient id="g82" gradientUnits="userSpaceOnUse" x1="1676" x2="1851" y1="0" y2="0"><stop offset="0.000" stop-color="#0070ff"/><stop offset="0.062" stop-color="#0068ff"/><stop offset="0.125" stop-color="#005eff"/><stop offset="0.188" stop-color="#0153ff"/><stop offset="0.250" stop-color="#1247ff"/><stop offset="0.312" stop-color="#4f39ff"/><stop offset="0.375" stop-color="#a529fe"/><stop offset="0.438" stop-color="#ed17e7"/><stop offset="0.500" stop-color="#ff08ab"/><stop offset="0.562" stop-color="#ff027e"/><stop offset="0.625" stop-color="#ff005d"/><stop offset="0.688" stop-color="#ff0045"/><stop offset="0.750" stop-color="#ff0034"/><stop offset="0.812" stop-color="#ff0026"/><stop offset="0.875" stop-color="#ff001c"/><stop offset="0.938" stop-color="#ff0013"/><stop offset="1.000" stop-color="#ff000c"/></linearGradient><linearGradient id="g83" gradientUnits="userSpaceOnUse" x1="1676" x2="1851" y1="0" y2="0"><stop offset="0.000" stop-color="#006bff"/><stop offset="0.062" stop-color="#0062ff"/><stop offset="0.125" stop-color="#0058ff"/><stop offset="0.188" stop-color="#014dff"/><stop offset="0.250" stop-color="#1340ff"/><stop offset="0.312" stop-color="#5131ff"/><stop offset="0.375" stop-color="#a621fe"/><stop offset="0.438" stop-color="#ed11e8"/><stop offset="0.500" stop-color="#ff05ad"/><stop offset="0.562" stop-color="#ff0180"/><stop offset="0.625" stop-color="#ff005f"/><stop offset="0.688" stop-color="#ff0047"/><stop offset="0.750" stop-color="#ff0036"/><stop offset="0.812" stop-color="#ff0028"/><stop offset="0.875" stop-color="#ff001d"/><stop offset="0.938" stop-color="#ff0014"/><stop offset="1.000" stop-color="#ff000d"/></linearGradient><linearGradient id="g84" gradientUnits="userSpaceOnUse" x1="1676" x2="1851" y1="0" y2="0"><stop offset="0.000" stop-color="#0065ff"/><stop offset="0.062" stop-color="#005cff"/><stop offset="0.125" stop-color="#0052ff"/><stop offset="0.188" stop-color="#0146ff"/><stop offset="0.250" stop-color="#1539ff"/><stop offset="0.312" stop-color="#532aff"/><stop offset="0.375" stop-color="#a61bfe"/><stop offset="0.438" stop-color="#ed0ce8"/><stop offset="0.500" stop-color="#ff03ae"/><stop offset="0.562" stop-color="#ff0182"/><stop offset="0.625" stop-color="#ff0060"/><stop offset="0.688" stop-color="#ff0049"/><stop offset="0.750" stop-color="#ff0037"/><stop offset="0.812" stop-color="#ff0029"/><stop offset="0.875" stop-color="#ff001e"/><stop offset="0.938" stop-color="#ff0015"/><stop offset="1.000" stop-color="#ff000e"/></linearGradient><linearGradient id="g85" gradientUnits="userSpaceOnUse" x1="1676" x2="1851" y1="0" y2="0"><stop offset="0.000" stop-color="#005fff"/><stop offset="0.062" stop-color="#0056ff"/><stop offset="0.125" stop-color="#004cff"/><stop offset="0.188" stop-color="#0140ff"/><stop offset="0.250" stop-color="#1733ff"/><stop offset="0.312" stop-color="#5524ff"/><stop offset="0.375" stop-color="#a715fe"/><stop offset="0.438" stop-color="#ed08e9"/><stop offset="0.500" stop-color="#ff02b0"/><stop offset="0.562" stop-color="#ff0083"/><stop offset="0.625" stop-color="#ff0062"/><stop offset="0.688" stop-color="#ff004a"/><stop offset="0.750" stop-color="#ff0039"/><stop offset="0.812" stop-color="#ff002b"/><stop offset="0.875" stop-color="#ff0020"/><stop offset="0.938" stop-color="#ff0017"/><stop offset="1.000" stop-color="#ff000f"/></linearGradient><linearGradient id="g86" gradientUnits="userSpaceOnUse" x1="1676" x2="1851" y1="0" y2="0"><stop offset="0.000" stop-color="#005aff"/><stop offset="0.062" stop-color="#0050ff"/><stop offset="0.125" stop-color="#0046ff"/><stop offset="0.188" stop-color="#013aff"/><stop offset="0.250" stop-color="#182dff"/><stop offset="0.312" stop-color="#571eff"/><stop offset="0.375" stop-color="#a810fe"/><stop offset="0.438" stop-color="#ed05ea"/><stop offset="0.500" stop-color="#fe01b1"/><stop offset="0.562" stop-color="#ff0085"/><stop offset="0.625" stop-color="#ff0064"/><stop offset="0.688" stop-color="#ff004c"/><stop offset="0.750" stop-color="#ff003a"/><stop offset="0.812" stop-color="#ff002c"/><stop offset="0.875" stop-color="#ff0021"/><stop offset="0.938" stop-color="#ff0018"/><stop offset="1.000" stop-color="#ff0010"/></linearGradient><linearGradient id="g87" gradientUnits="userSpaceOnUse" x1="1676" x2="1851" y1="0" y2="0"><stop offset="0.000" stop-color="#0054ff"/><stop offset="0.062" stop-color="#004bff"/><stop offset="0.125" stop-color="#0040ff"/><stop offset="0.188" stop-color="#0234ff"/><stop offset="0.250" stop-color="#1a27ff"/><stop offset="0.312" stop-color="#5918ff"/><stop offset="0.375" stop-color="#a90bfe"/><stop offset="0.438" stop-color="#ed03ea"/><stop offset="0.500" stop-color="#fe01b3"/><stop offset="0.562" stop-color="#ff0087"/><stop offset="0.625" stop-color="#ff0065"/><stop offset="0.688" stop-color="#ff004e"/><stop offset="0.750" stop-color="#ff003c"/><stop offset="0.812" stop-color="#ff002e"/><stop offset="0.875" stop-color="#ff0022"/><stop offset="0.938" stop-color="#ff0019"/><stop offset="1.000" stop-color="#ff0011"/></linearGradient><linearGradient id="g88" gradientUnits="userSpaceOnUse" x1="1676" x2="1851" y1="0" y2="0"><stop offset="0.000" stop-color="#004fff"/><stop offset="0.062" stop-color="#0046ff"/><stop offset="0.125" stop-color="#003bff"/><stop offset="0.188" stop-color="#022eff"/><stop offset="0.250" stop-color="#1c21ff"/><stop offset="0.312" stop-color="#5b13ff"/><stop offset="0.375" stop-color="#a908fe"/><stop offset="0.438" stop-color="#ed02eb"/><stop offset="0.500" stop-color="#fe00b4"/><stop offset="0.562" stop-color="#ff0088"/><stop offset="0.625" stop-color="#ff0067"/><stop offset="0.688" stop-color="#ff004f"/><stop offset="0.750" stop-color="#ff003d"/><stop offset="0.812" stop-color="#ff002f"/><stop offset="0.875" stop-color="#ff0024"/><stop offset="0.938" stop-color="#ff001a"/><stop offset="1.000" stop-color="#ff0013"/></linearGradient><linearGradient id="g89" gradientUnits="userSpaceOnUse" x1="1676" x2="1851" y1="0" y2="0"><stop offset="0.000" stop-color="#004aff"/><stop offset="0.062" stop-color="#0040ff"/><stop offset="0.125" stop-color="#0035ff"/><stop offset="0.188" stop-color="#0229ff"/><stop offset="0.250" stop-color="#1e1bff"/><stop offset="0.312" stop-color="#5d0eff"/><stop offset="0.375" stop-color="#aa05fe"/><stop offset="0.438" stop-color="#ed01ec"/><stop offset="0.500" stop-color="#fe00b5"/><stop offset="0.562" stop-color="#ff008a"/><stop offset="0.625" stop-color="#ff0069"/><stop offset="0.688" stop-color="#ff0051"/><stop offset="0.750" stop-color="#ff003e"/><stop offset="0.812" stop-color="#ff0030"/><stop offset="0.875" stop-color="#ff0025"/><stop offset="0.938" stop-color="#ff001c"/><stop offset="1.000" stop-color="#ff0014"/></linearGradient><linearGradient id="g90" gradientUnits="userSpaceOnUse" x1="1676" x2="1851" y1="0" y2="0"><stop offset="0.000" stop-color="#0045ff"/><stop offset="0.062" stop-color="#003bff"/><stop offset="0.125" stop-color="#0030ff"/><stop offset="0.188" stop-color="#0323ff"/><stop offset="0.250" stop-color="#1f16ff"/><stop offset="0.312" stop-color="#5e0aff"/><stop offset="0.375" stop-color="#ab03fe"/><stop offset="0.438" stop-color="#ed01ec"/><stop offset="0.500" stop-color="#fe00b7"/><stop offset="0.562" stop-color="#ff008b"/><stop offset="0.625" stop-color="#ff006a"/><stop offset="0.688" stop-color="#ff0052"/><stop offset="0.750" stop-color="#ff0040"/><stop offset="0.812" stop-color="#ff0032"/><stop offset="0.875" stop-color="#ff0026"/><stop offset="0.938" stop-color="#ff001d"/><stop offset="1.000" stop-color="#ff0015"/></linearGradient><linearGradient id="g91" gradientUnits="userSpaceOnUse" x1="1676" x2="1851" y1="0" y2="0"><stop offset="0.000" stop-color="#0040ff"/><stop offset="0.062" stop-color="#0036ff"/><stop offset="0.125" stop-color="#002bff"/><stop offset="0.188" stop-color="#031eff"/><stop offset="0.250" stop-color="#2112ff"/><stop offset="0.312" stop-color="#6007ff"/><stop offset="0.375" stop-color="#ab02fe"/><stop offset="0.438" stop-color="#ed00ed"/><stop offset="0.500" stop-color="#fe00b8"/><stop offset="0.562" stop-color="#ff008d"/><stop offset="0.625" stop-color="#ff006c"/><stop offset="0.688" stop-color="#ff0054"/><stop offset="0.750" stop-color="#ff0041"/><stop offset="0.812" stop-color="#ff0033"/><stop offset="0.875" stop-color="#ff0027"/><stop offset="0.938" stop-color="#ff001e"/><stop offset="1.000" stop-color="#ff0016"/></linearGradient><linearGradient id="g92" gradientUnits="userSpaceOnUse" x1="1676" x2="1851" y1="0" y2="0"><stop offset="0.000" stop-color="#003cff"/><stop offset="0.062" stop-color="#0031ff"/><stop offset="0.125" stop-color="#0026ff"/><stop offset="0.188" stop-color="#0419ff"/><stop offset="0.250" stop-color="#230dff"/><stop offset="0.312" stop-color="#6205ff"/><stop offset="0.375" stop-color="#ac01fe"/><stop offset="0.438" stop-color="#ed00ed"/><stop offset="0.500" stop-color="#fe00b9"/><stop offset="0.562" stop-color="#ff008e"/><stop offset="0.625" stop-color="#ff006d"/><stop offset="0.688" stop-color="#ff0055"/><stop offset="0.750" stop-color="#ff0043"/><stop offset="0.812" stop-color="#ff0034"/><stop offset="0.875" stop-color="#ff0029"/><stop offset="0.938" stop-color="#ff001f"/><stop offset="1.000" stop-color="#ff0017"/></linearGradient><linearGradient id="g93" gradientUnits="userSpaceOnUse" x1="1676" x2="1851" y1="0" y2="0"><stop offset="0.000" stop-color="#0037ff"/><stop offset="0.062" stop-color="#002cff"/><stop offset="0.125" stop-color="#0021ff"/><stop offset="0.188" stop-color="#0415ff"/><stop offset="0.250" stop-color="#250aff"/><stop offset="0.312" stop-color="#6303ff"/><stop offset="0.375" stop-color="#ac01fe"/><stop offset="0.438" stop-color="#ed00ee"/><stop offset="0.500" stop-color="#fe00bb"/><stop offset="0.562" stop-color="#ff0090"/><stop offset="0.625" stop-color="#ff006f"/><stop offset="0.688" stop-color="#ff0057"/><stop offset="0.750" stop-color="#ff0044"/><stop offset="0.812" stop-color="#ff0036"/><stop offset="0.875" stop-color="#ff002a"/><stop offset="0.938" stop-color="#ff0020"/><stop offset="1.000" stop-color="#ff0018"/></linearGradient><linearGradient id="g94" gradientUnits="userSpaceOnUse" x1="1676" x2="1851" y1="0" y2="0"><stop offset="0.000" stop-color="#0032ff"/><stop offset="0.062" stop-color="#0028ff"/><stop offset="0.125" stop-color="#001cff"/><stop offset="0.188" stop-color="#0511ff"/><stop offset="0.250" stop-color="#2707ff"/><stop offset="0.312" stop-color="#6502ff"/><stop offset="0.375" stop-color="#ad00fe"/><stop offset="0.438" stop-color="#ed00ee"/><stop offset="0.500" stop-color="#fe00bc"/><stop offset="0.562" stop-color="#ff0091"/><stop offset="0.625" stop-color="#ff0070"/><stop offset="0.688" stop-color="#ff0058"/><stop offset="0.750" stop-color="#ff0045"/><stop offset="0.812" stop-color="#ff0037"/><stop offset="0.875" stop-color="#ff002b"/><stop offset="0.938" stop-color="#ff0021"/><stop offset="1.000" stop-color="#ff0019"/></linearGradient><linearGradient id="g95" gradientUnits="userSpaceOnUse" x1="1676" x2="1851" y1="0" y2="0"><stop offset="0.000" stop-color="#002eff"/><stop offset="0.062" stop-color="#0023ff"/><stop offset="0.125" stop-color="#0018ff"/><stop offset="0.188" stop-color="#050dff"/><stop offset="0.250" stop-color="#2905ff"/><stop offset="0.312" stop-color="#6601ff"/><stop offset="0.375" stop-color="#ae00fe"/><stop offset="0.438" stop-color="#ed00ef"/><stop offset="0.500" stop-color="#fe00bd"/><stop offset="0.562" stop-color="#ff0093"/><stop offset="0.625" stop-color="#ff0072"/><stop offset="0.688" stop-color="#ff0059"/><stop offset="0.750" stop-color="#ff0047"/><stop offset="0.812" stop-color="#ff0038"/><stop offset="0.875" stop-color="#ff002c"/><stop offset="0.938" stop-color="#ff0023"/><stop offset="1.000" stop-color="#ff001a"/></linearGradient><linearGradient id="g96" gradientUnits="userSpaceOnUse" x1="1676" x2="1851" y1="0" y2="0"><stop offset="0.000" stop-color="#002aff"/><stop offset="0.062" stop-color="#001fff"/><stop offset="0.125" stop-color="#0014ff"/><stop offset="0.188" stop-color="#0609ff"/><stop offset="0.250" stop-color="#2b03ff"/><stop offset="0.312" stop-color="#6801ff"/><stop offset="0.375" stop-color="#ae00fe"/><stop offset="0.438" stop-color="#ec00ef"/><stop offset="0.500" stop-color="#fe00be"/><stop offset="0.562" stop-color="#ff0094"/><stop offset="0.625" stop-color="#ff0073"/><stop offset="0.688" stop-color="#ff005b"/><stop offset="0.750" stop-color="#ff0048"/><stop offset="0.812" stop-color="#ff0039"/><stop offset="0.875" stop-color="#ff002e"/><stop offset="0.938" stop-color="#ff0024"/><stop offset="1.000" stop-color="#ff001b"/></linearGradient><linearGradient id="g97" gradientUnits="userSpaceOnUse" x1="1676" x2="1851" y1="0" y2="0"><stop offset="0.000" stop-color="#0025ff"/><stop offset="0.062" stop-color="#001bff"/><stop offset="0.125" stop-color="#0010ff"/><stop offset="0.188" stop-color="#0707ff"/><stop offset="0.250" stop-color="#2d02ff"/><stop offset="0.312" stop-color="#6900ff"/><stop offset="0.375" stop-color="#af00fe"/><stop offset="0.438" stop-color="#ec00f0"/><stop offset="0.500" stop-color="#fe00bf"/><stop offset="0.562" stop-color="#ff0096"/><stop offset="0.625" stop-color="#ff0074"/><stop offset="0.688" stop-color="#ff005c"/><stop offset="0.750" stop-color="#ff0049"/><stop offset="0.812" stop-color="#ff003b"/><stop offset="0.875" stop-color="#ff002f"/><stop offset="0.938" stop-color="#ff0025"/><stop offset="1.000" stop-color="#ff001d"/></linearGradient><linearGradient id="g98" gradientUnits="userSpaceOnUse" x1="1676" x2="1851" y1="0" y2="0"><stop offset="0.000" stop-color="#0021ff"/><stop offset="0.062" stop-color="#0017ff"/><stop offset="0.125" stop-color="#000cff"/><stop offset="0.188" stop-color="#0805ff"/><stop offset="0.250" stop-color="#2f01ff"/><stop offset="0.312" stop-color="#6b00ff"/><stop offset="0.375" stop-color="#af00ff"/><stop offset="0.438" stop-color="#ec00f0"/><stop offset="0.500" stop-color="#fe00c0"/><stop offset="0.562" stop-color="#ff0097"/><stop offset="0.625" stop-color="#ff0076"/><stop offset="0.688" stop-color="#ff005d"/><stop offset="0.750" stop-color="#ff004b"/><stop offset="0.812" stop-color="#ff003c"/><stop offset="0.875" stop-color="#ff0030"/><stop offset="0.938" stop-color="#ff0026"/><stop offset="1.000" stop-color="#ff001e"/></linearGradient><linearGradient id="g99" gradientUnits="userSpaceOnUse" x1="1676" x2="1851" y1="0" y2="0"><stop offset="0.000" stop-color="#001dff"/><stop offset="0.062" stop-color="#0013ff"/><stop offset="0.125" stop-color="#0009ff"/><stop offset="0.188" stop-color="#0903ff"/><stop offset="0.250" stop-color="#3001ff"/><stop offset="0.312" stop-color="#6c00ff"/><stop offset="0.375" stop-color="#b000ff"/><stop offset="0.438" stop-color="#ec00f1"/><stop offset="0.500" stop-color="#fe00c2"/><stop offset="0.562" stop-color="#ff0098"/><stop offset="0.625" stop-color="#ff0077"/><stop offset="0.688" stop-color="#ff005f"/><stop offset="0.750" stop-color="#ff004c"/><stop offset="0.812" stop-color="#ff003d"/><stop offset="0.875" stop-color="#ff0031"/><stop offset="0.938" stop-color="#ff0027"/><stop offset="1.000" stop-color="#ff001f"/></linearGradient><linearGradient id="g100" gradientUnits="userSpaceOnUse" x1="1676" x2="1851" y1="0" y2="0"><stop offset="0.000" stop-color="#001aff"/><stop offset="0.062" stop-color="#000fff"/><stop offset="0.125" stop-color="#0007ff"/><stop offset="0.188" stop-color="#0902ff"/><stop offset="0.250" stop-color="#3200ff"/><stop offset="0.312" stop-color="#6d00ff"/><stop offset="0.375" stop-color="#b000ff"/><stop offset="0.438" stop-color="#ec00f1"/><stop offset="0.500" stop-color="#fe00c3"/><stop offset="0.562" stop-color="#ff0099"/><stop offset="0.625" stop-color="#ff0078"/><stop offset="0.688" stop-color="#ff0060"/><stop offset="0.750" stop-color="#ff004d"/><stop offset="0.812" stop-color="#ff003e"/><stop offset="0.875" stop-color="#ff0032"/><stop offset="0.938" stop-color="#ff0028"/><stop offset="1.000" stop-color="#ff0020"/></linearGradient><linearGradient id="g101" gradientUnits="userSpaceOnUse" x1="1676" x2="1851" y1="0" y2="0"><stop offset="0.000" stop-color="#0016ff"/><stop offset="0.062" stop-color="#000cff"/><stop offset="0.125" stop-color="#0004ff"/><stop offset="0.188" stop-color="#0a01ff"/><stop offset="0.250" stop-color="#3400ff"/><stop offset="0.312" stop-color="#6e00ff"/><stop offset="0.375" stop-color="#b000ff"/><stop offset="0.438" stop-color="#ec00f2"/><stop offset="0.500" stop-color="#fe00c3"/><stop offset="0.562" stop-color="#ff009a"/><stop offset="0.625" stop-color="#ff007a"/><stop offset="0.688" stop-color="#ff0061"/><stop offset="0.750" stop-color="#ff004e"/><stop offset="0.812" stop-color="#ff003f"/><stop offset="0.875" stop-color="#ff0033"/><stop offset="0.938" stop-color="#ff0029"/><stop offset="1.000" stop-color="#ff0020"/></linearGradient><linearGradient id="g102" gradientUnits="userSpaceOnUse" x1="1676" x2="1851" y1="0" y2="0"><stop offset="0.000" stop-color="#0013ff"/><stop offset="0.062" stop-color="#0009ff"/><stop offset="0.125" stop-color="#0003ff"/><stop offset="0.188" stop-color="#0b01ff"/><stop offset="0.250" stop-color="#3500ff"/><stop offset="0.312" stop-color="#6f00ff"/><stop offset="0.375" stop-color="#b100ff"/><stop offset="0.438" stop-color="#ec00f2"/><stop offset="0.500" stop-color="#fe00c4"/><stop offset="0.562" stop-color="#ff009b"/><stop offset="0.625" stop-color="#ff007b"/><stop offset="0.688" stop-color="#ff0062"/><stop offset="0.750" stop-color="#ff004f"/><stop offset="0.812" stop-color="#ff0040"/><stop offset="0.875" stop-color="#ff0034"/><stop offset="0.938" stop-color="#ff002a"/><stop offset="1.000" stop-color="#ff0021"/></linearGradient><linearGradient id="g103" gradientUnits="userSpaceOnUse" x1="1676" x2="1851" y1="0" y2="0"><stop offset="0.000" stop-color="#0011ff"/><stop offset="0.062" stop-color="#0007ff"/><stop offset="0.125" stop-color="#0002ff"/><stop offset="0.188" stop-color="#0c00ff"/><stop offset="0.250" stop-color="#3600ff"/><stop offset="0.312" stop-color="#7000ff"/><stop offset="0.375" stop-color="#b100ff"/><stop offset="0.438" stop-color="#ec00f2"/><stop offset="0.500" stop-color="#fe00c5"/><stop offset="0.562" stop-color="#ff009c"/><stop offset="0.625" stop-color="#ff007b"/><stop offset="0.688" stop-color="#ff0063"/><stop offset="0.750" stop-color="#ff0050"/><stop offset="0.812" stop-color="#ff0041"/><stop offset="0.875" stop-color="#ff0035"/><stop offset="0.938" stop-color="#ff002b"/><stop offset="1.000" stop-color="#ff0022"/></linearGradient><linearGradient id="g104" gradientUnits="userSpaceOnUse" x1="1676" x2="1851" y1="0" y2="0"><stop offset="0.000" stop-color="#000fff"/><stop offset="0.062" stop-color="#0005ff"/><stop offset="0.125" stop-color="#0001ff"/><stop offset="0.188" stop-color="#0c00ff"/><stop offset="0.250" stop-color="#3700ff"/><stop offset="0.312" stop-color="#7100ff"/><stop offset="0.375" stop-color="#b100ff"/><stop offset="0.438" stop-color="#ec00f2"/><stop offset="0.500" stop-color="#fe00c6"/><stop offset="0.562" stop-color="#ff009d"/><stop offset="0.625" stop-color="#ff007c"/><stop offset="0.688" stop-color="#ff0064"/><stop offset="0.750" stop-color="#ff0051"/><stop offset="0.812" stop-color="#ff0042"/><stop offset="0.875" stop-color="#ff0035"/><stop offset="0.938" stop-color="#ff002b"/><stop offset="1.000" stop-color="#ff0023"/></linearGradient></defs><g clip-path="url(#lc)"><rect x="1676" y="259" width="175" height="2" fill="url(#g0)"/><rect x="1676" y="261" width="175" height="2" fill="url(#g1)"/><rect x="1676" y="263" width="175" height="2" fill="url(#g2)"/><rect x="1676" y="265" width="175" height="2" fill="url(#g3)"/><rect x="1676" y="267" width="175" height="2" fill="url(#g4)"/><rect x="1676" y="269" width="175" height="2" fill="url(#g5)"/><rect x="1676" y="271" width="175" height="2" fill="url(#g6)"/><rect x="1676" y="273" width="175" height="2" fill="url(#g7)"/><rect x="1676" y="275" width="175" height="2" fill="url(#g8)"/><rect x="1676" y="277" width="175" height="2" fill="url(#g9)"/><rect x="1676" y="279" width="175" height="2" fill="url(#g10)"/><rect x="1676" y="281" width="175" height="2" fill="url(#g11)"/><rect x="1676" y="283" width="175" height="2" fill="url(#g12)"/><rect x="1676" y="285" width="175" height="2" fill="url(#g13)"/><rect x="1676" y="287" width="175" height="2" fill="url(#g14)"/><rect x="1676" y="289" width="175" height="2" fill="url(#g15)"/><rect x="1676" y="291" width="175" height="2" fill="url(#g16)"/><rect x="1676" y="293" width="175" height="2" fill="url(#g17)"/><rect x="1676" y="295" width="175" height="2" fill="url(#g18)"/><rect x="1676" y="297" width="175" height="2" fill="url(#g19)"/><rect x="1676" y="299" width="175" height="2" fill="url(#g20)"/><rect x="1676" y="301" width="175" height="2" fill="url(#g21)"/><rect x="1676" y="303" width="175" height="2" fill="url(#g22)"/><rect x="1676" y="305" width="175" height="2" fill="url(#g23)"/><rect x="1676" y="307" width="175" height="2" fill="url(#g24)"/><rect x="1676" y="309" width="175" height="2" fill="url(#g25)"/><rect x="1676" y="311" width="175" height="2" fill="url(#g26)"/><rect x="1676" y="313" width="175" height="2" fill="url(#g27)"/><rect x="1676" y="315" width="175" height="2" fill="url(#g28)"/><rect x="1676" y="317" width="175" height="2" fill="url(#g29)"/><rect x="1676" y="319" width="175" height="2" fill="url(#g30)"/><rect x="1676" y="321" width="175" height="2" fill="url(#g31)"/><rect x="1676" y="323" width="175" height="2" fill="url(#g32)"/><rect x="1676" y="325" width="175" height="2" fill="url(#g33)"/><rect x="1676" y="327" width="175" height="2" fill="url(#g34)"/><rect x="1676" y="329" width="175" height="2" fill="url(#g35)"/><rect x="1676" y="331" width="175" height="2" fill="url(#g36)"/><rect x="1676" y="333" width="175" height="2" fill="url(#g37)"/><rect x="1676" y="335" width="175" height="2" fill="url(#g38)"/><rect x="1676" y="337" width="175" height="2" fill="url(#g39)"/><rect x="1676" y="339" width="175" height="2" fill="url(#g40)"/><rect x="1676" y="341" width="175" height="2" fill="url(#g41)"/><rect x="1676" y="343" width="175" height="2" fill="url(#g42)"/><rect x="1676" y="345" width="175" height="2" fill="url(#g43)"/><rect x="1676" y="347" width="175" height="2" fill="url(#g44)"/><rect x="1676" y="349" width="175" height="2" fill="url(#g45)"/><rect x="1676" y="351" width="175" height="2" fill="url(#g46)"/><rect x="1676" y="353" width="175" height="2" fill="url(#g47)"/><rect x="1676" y="355" width="175" height="2" fill="url(#g48)"/><rect x="1676" y="357" width="175" height="2" fill="url(#g49)"/><rect x="1676" y="359" width="175" height="2" fill="url(#g50)"/><rect x="1676" y="361" width="175" height="2" fill="url(#g51)"/><rect x="1676" y="363" width="175" height="2" fill="url(#g52)"/><rect x="1676" y="365" width="175" height="2" fill="url(#g53)"/><rect x="1676" y="367" width="175" height="2" fill="url(#g54)"/><rect x="1676" y="369" width="175" height="2" fill="url(#g55)"/><rect x="1676" y="371" width="175" height="2" fill="url(#g56)"/><rect x="1676" y="373" width="175" height="2" fill="url(#g57)"/><rect x="1676" y="375" width="175" height="2" fill="url(#g58)"/><rect x="1676" y="377" width="175" height="2" fill="url(#g59)"/><rect x="1676" y="379" width="175" height="2" fill="url(#g60)"/><rect x="1676" y="381" width="175" height="2" fill="url(#g61)"/><rect x="1676" y="383" width="175" height="2" fill="url(#g62)"/><rect x="1676" y="385" width="175" height="2" fill="url(#g63)"/><rect x="1676" y="387" width="175" height="2" fill="url(#g64)"/><rect x="1676" y="389" width="175" height="2" fill="url(#g65)"/><rect x="1676" y="391" width="175" height="2" fill="url(#g66)"/><rect x="1676" y="393" width="175" height="2" fill="url(#g67)"/><rect x="1676" y="395" width="175" height="2" fill="url(#g68)"/><rect x="1676" y="397" width="175" height="2" fill="url(#g69)"/><rect x="1676" y="399" width="175" height="2" fill="url(#g70)"/><rect x="1676" y="401" width="175" height="2" fill="url(#g71)"/><rect x="1676" y="403" width="175" height="2" fill="url(#g72)"/><rect x="1676" y="405" width="175" height="2" fill="url(#g73)"/><rect x="1676" y="407" width="175" height="2" fill="url(#g74)"/><rect x="1676" y="409" width="175" height="2" fill="url(#g75)"/><rect x="1676" y="411" width="175" height="2" fill="url(#g76)"/><rect x="1676" y="413" width="175" height="2" fill="url(#g77)"/><rect x="1676" y="415" width="175" height="2" fill="url(#g78)"/><rect x="1676" y="417" width="175" height="2" fill="url(#g79)"/><rect x="1676" y="419" width="175" height="2" fill="url(#g80)"/><rect x="1676" y="421" width="175" height="2" fill="url(#g81)"/><rect x="1676" y="423" width="175" height="2" fill="url(#g82)"/><rect x="1676" y="425" width="175" height="2" fill="url(#g83)"/><rect x="1676" y="427" width="175" height="2" fill="url(#g84)"/><rect x="1676" y="429" width="175" height="2" fill="url(#g85)"/><rect x="1676" y="431" width="175" height="2" fill="url(#g86)"/><rect x="1676" y="433" width="175" height="2" fill="url(#g87)"/><rect x="1676" y="435" width="175" height="2" fill="url(#g88)"/><rect x="1676" y="437" width="175" height="2" fill="url(#g89)"/><rect x="1676" y="439" width="175" height="2" fill="url(#g90)"/><rect x="1676" y="441" width="175" height="2" fill="url(#g91)"/><rect x="1676" y="443" width="175" height="2" fill="url(#g92)"/><rect x="1676" y="445" width="175" height="2" fill="url(#g93)"/><rect x="1676" y="447" width="175" height="2" fill="url(#g94)"/><rect x="1676" y="449" width="175" height="2" fill="url(#g95)"/><rect x="1676" y="451" width="175" height="2" fill="url(#g96)"/><rect x="1676" y="453" width="175" height="2" fill="url(#g97)"/><rect x="1676" y="455" width="175" height="2" fill="url(#g98)"/><rect x="1676" y="457" width="175" height="2" fill="url(#g99)"/><rect x="1676" y="459" width="175" height="2" fill="url(#g100)"/><rect x="1676" y="461" width="175" height="2" fill="url(#g101)"/><rect x="1676" y="463" width="175" height="2" fill="url(#g102)"/><rect x="1676" y="465" width="175" height="2" fill="url(#g103)"/><rect x="1676" y="467" width="175" height="2" fill="url(#g104)"/></g><path d="M1699.5 248V467M1677 442.5H1888M1723.5 248V467M1677 417.5H1888M1746.5 248V467M1677 392.5H1888M1770.5 248V467M1677 368.5H1888M1793.5 248V467M1677 343.5H1888M1817.5 248V467M1677 318.5H1888M1840.5 248V467M1677 294.5H1888M1864.5 248V467M1677 269.5H1888" stroke="#000" stroke-width="1" stroke-dasharray="1 2" fill="none"/><rect x="1676.5" y="245.5" width="212" height="222" fill="none" stroke="#000" stroke-width="1"/><circle cx="1780.2" cy="363.9" r="2.8" fill="#000"/><circle cx="1753.8" cy="381.9" r="2.3" fill="#fff" stroke="#777" stroke-width="0.9"/></svg>
<div class="t" style="left:1655.83px;top:440px;font-size:12px;line-height:14px;letter-spacing:0.187px;color:#000;">0.1</div>
<div class="t" style="left:1691.22px;top:471px;font-size:12px;line-height:14px;letter-spacing:0.000px;color:#000;">0.1</div>
<div class="t" style="left:1655.83px;top:415px;font-size:12px;line-height:14px;letter-spacing:0.195px;color:#000;">0.2</div>
<div class="t" style="left:1715.23px;top:471px;font-size:12px;line-height:14px;letter-spacing:0.000px;color:#000;">0.2</div>
<div class="t" style="left:1655.83px;top:390px;font-size:12px;line-height:14px;letter-spacing:0.157px;color:#000;">0.3</div>
<div class="t" style="left:1738.19px;top:471px;font-size:12px;line-height:14px;letter-spacing:0.000px;color:#000;">0.3</div>
<div class="t" style="left:1655.83px;top:366px;font-size:12px;line-height:14px;letter-spacing:0.069px;color:#000;">0.4</div>
<div class="t" style="left:1762.10px;top:471px;font-size:12px;line-height:14px;letter-spacing:0.000px;color:#000;">0.4</div>
<div class="t" style="left:1655.83px;top:341px;font-size:12px;line-height:14px;letter-spacing:0.146px;color:#000;">0.5</div>
<div class="t" style="left:1785.18px;top:471px;font-size:12px;line-height:14px;letter-spacing:0.000px;color:#000;">0.5</div>
<div class="t" style="left:1655.83px;top:316px;font-size:12px;line-height:14px;letter-spacing:0.157px;color:#000;">0.6</div>
<div class="t" style="left:1809.19px;top:471px;font-size:12px;line-height:14px;letter-spacing:0.000px;color:#000;">0.6</div>
<div class="t" style="left:1655.83px;top:292px;font-size:12px;line-height:14px;letter-spacing:0.195px;color:#000;">0.7</div>
<div class="t" style="left:1832.23px;top:471px;font-size:12px;line-height:14px;letter-spacing:0.000px;color:#000;">0.7</div>
<div class="t" style="left:1655.83px;top:267px;font-size:12px;line-height:14px;letter-spacing:0.154px;color:#000;">0.8</div>
<div class="t" style="left:1856.19px;top:471px;font-size:12px;line-height:14px;letter-spacing:0.000px;color:#000;">0.8</div>
<div class="t" style="left:1655.83px;top:242px;font-size:12px;line-height:14px;letter-spacing:0.178px;color:#000;">0.9</div>
<div class="t" style="left:1880.21px;top:471px;font-size:12px;line-height:14px;letter-spacing:0.000px;color:#000;">0.9</div>
<div class="r" style="left:7px;top:579px;width:1897px;height:419px;background:#fff;"></div>
<div class="r" style="left:8px;top:580px;width:1895px;height:417px;background:#fff;border:1px solid #7c8088;"></div>
<div class="r" style="left:78px;top:581px;width:1px;height:28px;background:#ececec;"></div>
<div class="r" style="left:78px;top:609px;width:1px;height:387px;background:#d9d9d9;"></div>
<div class="r" style="left:189px;top:581px;width:1px;height:28px;background:#ececec;"></div>
<div class="r" style="left:189px;top:609px;width:1px;height:387px;background:#d9d9d9;"></div>
<div class="r" style="left:300px;top:581px;width:1px;height:28px;background:#ececec;"></div>
<div class="r" style="left:300px;top:609px;width:1px;height:387px;background:#d9d9d9;"></div>
<div class="r" style="left:411px;top:581px;width:1px;height:28px;background:#ececec;"></div>
<div class="r" style="left:411px;top:609px;width:1px;height:387px;background:#d9d9d9;"></div>
<div class="r" style="left:522px;top:581px;width:1px;height:28px;background:#ececec;"></div>
<div class="r" style="left:522px;top:609px;width:1px;height:387px;background:#d9d9d9;"></div>
<div class="r" style="left:633px;top:581px;width:1px;height:28px;background:#ececec;"></div>
<div class="r" style="left:633px;top:609px;width:1px;height:387px;background:#d9d9d9;"></div>
<div class="r" style="left:744px;top:581px;width:1px;height:28px;background:#ececec;"></div>
<div class="r" style="left:744px;top:609px;width:1px;height:387px;background:#d9d9d9;"></div>
<div class="r" style="left:855px;top:581px;width:1px;height:28px;background:#ececec;"></div>
<div class="r" style="left:855px;top:609px;width:1px;height:387px;background:#d9d9d9;"></div>
<div class="r" style="left:966px;top:581px;width:1px;height:28px;background:#ececec;"></div>
<div class="r" style="left:966px;top:609px;width:1px;height:387px;background:#d9d9d9;"></div>
<div class="r" style="left:1077px;top:581px;width:1px;height:28px;background:#ececec;"></div>
<div class="r" style="left:1077px;top:609px;width:1px;height:387px;background:#d9d9d9;"></div>
<div class="r" style="left:1188px;top:581px;width:1px;height:28px;background:#ececec;"></div>
<div class="r" style="left:1188px;top:609px;width:1px;height:387px;background:#d9d9d9;"></div>
<div class="r" style="left:1299px;top:581px;width:1px;height:28px;background:#ececec;"></div>
<div class="r" style="left:1299px;top:609px;width:1px;height:387px;background:#d9d9d9;"></div>
<div class="r" style="left:1410px;top:581px;width:1px;height:28px;background:#ececec;"></div>
<div class="r" style="left:1410px;top:609px;width:1px;height:387px;background:#d9d9d9;"></div>
<div class="r" style="left:1521px;top:581px;width:1px;height:28px;background:#ececec;"></div>
<div class="r" style="left:1521px;top:609px;width:1px;height:387px;background:#d9d9d9;"></div>
<div class="r" style="left:1632px;top:581px;width:1px;height:28px;background:#ececec;"></div>
<div class="r" style="left:1632px;top:609px;width:1px;height:387px;background:#d9d9d9;"></div>
<div class="r" style="left:1743px;top:581px;width:1px;height:28px;background:#ececec;"></div>
<div class="r" style="left:1743px;top:609px;width:1px;height:387px;background:#d9d9d9;"></div>
<div class="r" style="left:78px;top:639px;width:1666px;height:1px;background:#d9d9d9;"></div>
<div class="r" style="left:78px;top:669px;width:1666px;height:1px;background:#d9d9d9;"></div>
<div class="r" style="left:78px;top:699px;width:1666px;height:1px;background:#d9d9d9;"></div>
<div class="r" style="left:78px;top:729px;width:1666px;height:1px;background:#d9d9d9;"></div>
<div class="r" style="left:78px;top:759px;width:1666px;height:1px;background:#d9d9d9;"></div>
<div class="r" style="left:78px;top:789px;width:1666px;height:1px;background:#d9d9d9;"></div>
<div class="r" style="left:78px;top:819px;width:1666px;height:1px;background:#d9d9d9;"></div>
<div class="r" style="left:78px;top:849px;width:1666px;height:1px;background:#d9d9d9;"></div>
<div class="r" style="left:78px;top:879px;width:1666px;height:1px;background:#d9d9d9;"></div>
<div class="r" style="left:78px;top:909px;width:1666px;height:1px;background:#d9d9d9;"></div>
<div class="r" style="left:78px;top:939px;width:1666px;height:1px;background:#d9d9d9;"></div>
<div class="r" style="left:78px;top:969px;width:1666px;height:1px;background:#d9d9d9;"></div>
<div class="t" style="left:128.82px;top:588px;font-size:15.5px;line-height:17px;letter-spacing:0.000px;color:#000;">X</div>
<div class="t" style="left:239.83px;top:588px;font-size:15.5px;line-height:17px;letter-spacing:0.000px;color:#000;">Y</div>
<div class="t" style="left:351.26px;top:588px;font-size:15.5px;line-height:17px;letter-spacing:0.000px;color:#000;">Z</div>
<div class="t" style="left:463.12px;top:588px;font-size:15.5px;line-height:17px;letter-spacing:0.000px;color:#000;">x</div>
<div class="t" style="left:574.12px;top:588px;font-size:15.5px;line-height:17px;letter-spacing:0.000px;color:#000;">y</div>
<div class="t" style="left:680.21px;top:588px;font-size:15.5px;line-height:17px;letter-spacing:0.000px;color:#000;">Lv</div>
<div class="t" style="left:794.10px;top:588px;font-size:15.5px;line-height:17px;letter-spacing:0.000px;color:#000;">u'</div>
<div class="t" style="left:906.01px;top:588px;font-size:15.5px;line-height:17px;letter-spacing:0.000px;color:#000;">v'</div>
<div class="t" style="left:1009.23px;top:588px;font-size:15.5px;line-height:17px;letter-spacing:0.000px;color:#000;">Tcp</div>
<div class="t" style="left:1120.21px;top:588px;font-size:15.5px;line-height:17px;letter-spacing:0.000px;color:#000;">duv</div>
<div class="t" style="left:1236.26px;top:588px;font-size:15.5px;line-height:17px;letter-spacing:0.000px;color:#000;">λd</div>
<div class="t" style="left:1345.23px;top:588px;font-size:15.5px;line-height:17px;letter-spacing:0.000px;color:#000;">Pe</div>
<div class="t" style="left:1458.50px;top:588px;font-size:15.5px;line-height:17px;letter-spacing:0.000px;color:#000;">Δt</div>
<div class="t" style="left:1560.34px;top:588px;font-size:15.5px;line-height:17px;letter-spacing:0.000px;color:#000;">Date</div>
<div class="t" style="left:1670.95px;top:588px;font-size:15.5px;line-height:17px;letter-spacing:0.000px;color:#000;">Time</div>
<div class="t" style="left:14.03px;top:617px;font-size:15.3px;line-height:17px;letter-spacing:0.000px;color:#000;">2</div>
<div class="t" style="left:81.33px;top:616px;font-size:15.3px;line-height:17px;letter-spacing:0.401px;color:#000;">14.0188</div>
<div class="t" style="left:192.33px;top:616px;font-size:15.3px;line-height:17px;letter-spacing:0.396px;color:#000;">13.377342</div>
<div class="t" style="left:304.15px;top:616px;font-size:15.3px;line-height:17px;letter-spacing:0.407px;color:#000;">4.46121</div>
<div class="t" style="left:414.90px;top:616px;font-size:15.3px;line-height:17px;letter-spacing:0.402px;color:#000;">0.440049</div>
<div class="t" style="left:525.90px;top:616px;font-size:15.3px;line-height:17px;letter-spacing:0.404px;color:#000;">0.419914</div>
<div class="t" style="left:636.33px;top:616px;font-size:15.3px;line-height:17px;letter-spacing:0.396px;color:#000;">13.377342</div>
<div class="t" style="left:747.90px;top:616px;font-size:15.3px;line-height:17px;letter-spacing:0.409px;color:#000;">0.2459</div>
<div class="t" style="left:858.90px;top:616px;font-size:15.3px;line-height:17px;letter-spacing:0.409px;color:#000;">0.5279</div>
<div class="t" style="left:969.92px;top:616px;font-size:15.3px;line-height:17px;letter-spacing:0.495px;color:#000;">3074</div>
<div class="t" style="left:1080.90px;top:616px;font-size:15.3px;line-height:17px;letter-spacing:0.410px;color:#000;">0.0058</div>
<div class="t" style="left:1191.89px;top:616px;font-size:15.3px;line-height:17px;letter-spacing:0.410px;color:#000;">580.66</div>
<div class="t" style="left:1302.89px;top:616px;font-size:15.3px;line-height:17px;letter-spacing:0.416px;color:#000;">58.16</div>
<div class="t" style="left:1413.33px;top:616px;font-size:15.3px;line-height:17px;letter-spacing:0.534px;color:#000;">185</div>
<div class="t" style="left:1524.73px;top:616px;font-size:15.3px;line-height:17px;letter-spacing:0.877px;color:#000;">2022/01/25</div>
<div class="t" style="left:1639.03px;top:616px;font-size:15.3px;line-height:17px;letter-spacing:0.495px;color:#000;">11:05:20</div>
<div class="t" style="left:14.22px;top:647px;font-size:15.3px;line-height:17px;letter-spacing:0.000px;color:#000;">3</div>
<div class="t" style="left:81.33px;top:646px;font-size:15.3px;line-height:17px;letter-spacing:0.401px;color:#000;">13.9365</div>
<div class="t" style="left:192.33px;top:646px;font-size:15.3px;line-height:17px;letter-spacing:0.397px;color:#000;">13.302768</div>
<div class="t" style="left:304.15px;top:646px;font-size:15.3px;line-height:17px;letter-spacing:0.409px;color:#000;">4.44444</div>
<div class="t" style="left:414.90px;top:646px;font-size:15.3px;line-height:17px;letter-spacing:0.404px;color:#000;">0.439864</div>
<div class="t" style="left:525.90px;top:646px;font-size:15.3px;line-height:17px;letter-spacing:0.402px;color:#000;">0.419861</div>
<div class="t" style="left:636.33px;top:646px;font-size:15.3px;line-height:17px;letter-spacing:0.397px;color:#000;">13.302768</div>
<div class="t" style="left:747.90px;top:646px;font-size:15.3px;line-height:17px;letter-spacing:0.410px;color:#000;">0.2458</div>
<div class="t" style="left:858.90px;top:646px;font-size:15.3px;line-height:17px;letter-spacing:0.409px;color:#000;">0.5279</div>
<div class="t" style="left:969.92px;top:646px;font-size:15.3px;line-height:17px;letter-spacing:0.492px;color:#000;">3076</div>
<div class="t" style="left:1080.90px;top:646px;font-size:15.3px;line-height:17px;letter-spacing:0.410px;color:#000;">0.0058</div>
<div class="t" style="left:1191.89px;top:646px;font-size:15.3px;line-height:17px;letter-spacing:0.410px;color:#000;">580.65</div>
<div class="t" style="left:1302.89px;top:646px;font-size:15.3px;line-height:17px;letter-spacing:0.416px;color:#000;">58.08</div>
<div class="t" style="left:1413.33px;top:646px;font-size:15.3px;line-height:17px;letter-spacing:0.538px;color:#000;">174</div>
<div class="t" style="left:1524.73px;top:646px;font-size:15.3px;line-height:17px;letter-spacing:0.877px;color:#000;">2022/01/25</div>
<div class="t" style="left:1639.03px;top:646px;font-size:15.3px;line-height:17px;letter-spacing:0.495px;color:#000;">11:05:20</div>
<div class="t" style="left:14.45px;top:677px;font-size:15.3px;line-height:17px;letter-spacing:0.000px;color:#000;">4</div>
<div class="t" style="left:81.33px;top:676px;font-size:15.3px;line-height:17px;letter-spacing:0.400px;color:#000;">13.9052</div>
<div class="t" style="left:192.33px;top:676px;font-size:15.3px;line-height:17px;letter-spacing:0.396px;color:#000;">13.272231</div>
<div class="t" style="left:304.15px;top:676px;font-size:15.3px;line-height:17px;letter-spacing:0.406px;color:#000;">4.43187</div>
<div class="t" style="left:414.90px;top:676px;font-size:15.3px;line-height:17px;letter-spacing:0.402px;color:#000;">0.439908</div>
<div class="t" style="left:525.90px;top:676px;font-size:15.3px;line-height:17px;letter-spacing:0.404px;color:#000;">0.419884</div>
<div class="t" style="left:636.33px;top:676px;font-size:15.3px;line-height:17px;letter-spacing:0.396px;color:#000;">13.272231</div>
<div class="t" style="left:747.90px;top:676px;font-size:15.3px;line-height:17px;letter-spacing:0.410px;color:#000;">0.2458</div>
<div class="t" style="left:858.90px;top:676px;font-size:15.3px;line-height:17px;letter-spacing:0.409px;color:#000;">0.5279</div>
<div class="t" style="left:969.92px;top:676px;font-size:15.3px;line-height:17px;letter-spacing:0.492px;color:#000;">3076</div>
<div class="t" style="left:1080.90px;top:676px;font-size:15.3px;line-height:17px;letter-spacing:0.410px;color:#000;">0.0058</div>
<div class="t" style="left:1191.89px;top:676px;font-size:15.3px;line-height:17px;letter-spacing:0.410px;color:#000;">580.65</div>
<div class="t" style="left:1302.89px;top:676px;font-size:15.3px;line-height:17px;letter-spacing:0.417px;color:#000;">58.10</div>
<div class="t" style="left:1413.33px;top:676px;font-size:15.3px;line-height:17px;letter-spacing:0.531px;color:#000;">182</div>
<div class="t" style="left:1524.73px;top:676px;font-size:15.3px;line-height:17px;letter-spacing:0.877px;color:#000;">2022/01/25</div>
<div class="t" style="left:1639.03px;top:676px;font-size:15.3px;line-height:17px;letter-spacing:0.495px;color:#000;">11:05:20</div>
<div class="t" style="left:14.19px;top:707px;font-size:15.3px;line-height:17px;letter-spacing:0.000px;color:#000;">5</div>
<div class="t" style="left:81.33px;top:706px;font-size:15.3px;line-height:17px;letter-spacing:0.401px;color:#000;">13.8038</div>
<div class="t" style="left:192.33px;top:706px;font-size:15.3px;line-height:17px;letter-spacing:0.396px;color:#000;">13.172299</div>
<div class="t" style="left:304.15px;top:706px;font-size:15.3px;line-height:17px;letter-spacing:0.407px;color:#000;">4.40671</div>
<div class="t" style="left:414.90px;top:706px;font-size:15.3px;line-height:17px;letter-spacing:0.401px;color:#000;">0.439852</div>
<div class="t" style="left:525.90px;top:706px;font-size:15.3px;line-height:17px;letter-spacing:0.403px;color:#000;">0.419730</div>
<div class="t" style="left:636.33px;top:706px;font-size:15.3px;line-height:17px;letter-spacing:0.396px;color:#000;">13.172299</div>
<div class="t" style="left:747.90px;top:706px;font-size:15.3px;line-height:17px;letter-spacing:0.410px;color:#000;">0.2458</div>
<div class="t" style="left:858.90px;top:706px;font-size:15.3px;line-height:17px;letter-spacing:0.410px;color:#000;">0.5278</div>
<div class="t" style="left:969.92px;top:706px;font-size:15.3px;line-height:17px;letter-spacing:0.492px;color:#000;">3076</div>
<div class="t" style="left:1080.90px;top:706px;font-size:15.3px;line-height:17px;letter-spacing:0.409px;color:#000;">0.0057</div>
<div class="t" style="left:1191.89px;top:706px;font-size:15.3px;line-height:17px;letter-spacing:0.409px;color:#000;">580.67</div>
<div class="t" style="left:1302.89px;top:706px;font-size:15.3px;line-height:17px;letter-spacing:0.419px;color:#000;">58.04</div>
<div class="t" style="left:1413.33px;top:706px;font-size:15.3px;line-height:17px;letter-spacing:0.533px;color:#000;">183</div>
<div class="t" style="left:1524.73px;top:706px;font-size:15.3px;line-height:17px;letter-spacing:0.877px;color:#000;">2022/01/25</div>
<div class="t" style="left:1639.03px;top:706px;font-size:15.3px;line-height:17px;letter-spacing:0.494px;color:#000;">11:05:21</div>
<div class="t" style="left:14.02px;top:737px;font-size:15.3px;line-height:17px;letter-spacing:0.000px;color:#000;">6</div>
<div class="t" style="left:81.33px;top:736px;font-size:15.3px;line-height:17px;letter-spacing:0.401px;color:#000;">13.7853</div>
<div class="t" style="left:192.33px;top:736px;font-size:15.3px;line-height:17px;letter-spacing:0.398px;color:#000;">13.153084</div>
<div class="t" style="left:304.15px;top:736px;font-size:15.3px;line-height:17px;letter-spacing:0.407px;color:#000;">4.40839</div>
<div class="t" style="left:414.90px;top:736px;font-size:15.3px;line-height:17px;letter-spacing:0.402px;color:#000;">0.439768</div>
<div class="t" style="left:525.90px;top:736px;font-size:15.3px;line-height:17px;letter-spacing:0.402px;color:#000;">0.419599</div>
<div class="t" style="left:636.33px;top:736px;font-size:15.3px;line-height:17px;letter-spacing:0.398px;color:#000;">13.153084</div>
<div class="t" style="left:747.90px;top:736px;font-size:15.3px;line-height:17px;letter-spacing:0.410px;color:#000;">0.2458</div>
<div class="t" style="left:858.90px;top:736px;font-size:15.3px;line-height:17px;letter-spacing:0.409px;color:#000;">0.5277</div>
<div class="t" style="left:969.92px;top:736px;font-size:15.3px;line-height:17px;letter-spacing:0.492px;color:#000;">3076</div>
<div class="t" style="left:1080.90px;top:736px;font-size:15.3px;line-height:17px;letter-spacing:0.409px;color:#000;">0.0057</div>
<div class="t" style="left:1191.89px;top:736px;font-size:15.3px;line-height:17px;letter-spacing:0.410px;color:#000;">580.68</div>
<div class="t" style="left:1302.89px;top:736px;font-size:15.3px;line-height:17px;letter-spacing:0.416px;color:#000;">57.98</div>
<div class="t" style="left:1413.33px;top:736px;font-size:15.3px;line-height:17px;letter-spacing:0.535px;color:#000;">180</div>
<div class="t" style="left:1524.73px;top:736px;font-size:15.3px;line-height:17px;letter-spacing:0.877px;color:#000;">2022/01/25</div>
<div class="t" style="left:1639.03px;top:736px;font-size:15.3px;line-height:17px;letter-spacing:0.494px;color:#000;">11:05:21</div>
<div class="t" style="left:14.02px;top:767px;font-size:15.3px;line-height:17px;letter-spacing:0.000px;color:#000;">7</div>
<div class="t" style="left:81.33px;top:766px;font-size:15.3px;line-height:17px;letter-spacing:0.400px;color:#000;">13.7731</div>
<div class="t" style="left:192.33px;top:766px;font-size:15.3px;line-height:17px;letter-spacing:0.396px;color:#000;">13.142289</div>
<div class="t" style="left:304.15px;top:766px;font-size:15.3px;line-height:17px;letter-spacing:0.412px;color:#000;">4.3886</div>
<div class="t" style="left:414.90px;top:766px;font-size:15.3px;line-height:17px;letter-spacing:0.402px;color:#000;">0.439979</div>
<div class="t" style="left:525.90px;top:766px;font-size:15.3px;line-height:17px;letter-spacing:0.402px;color:#000;">0.419828</div>
<div class="t" style="left:636.33px;top:766px;font-size:15.3px;line-height:17px;letter-spacing:0.396px;color:#000;">13.142289</div>
<div class="t" style="left:747.90px;top:766px;font-size:15.3px;line-height:17px;letter-spacing:0.409px;color:#000;">0.2459</div>
<div class="t" style="left:858.90px;top:766px;font-size:15.3px;line-height:17px;letter-spacing:0.409px;color:#000;">0.5279</div>
<div class="t" style="left:969.92px;top:766px;font-size:15.3px;line-height:17px;letter-spacing:0.495px;color:#000;">3074</div>
<div class="t" style="left:1080.90px;top:766px;font-size:15.3px;line-height:17px;letter-spacing:0.409px;color:#000;">0.0057</div>
<div class="t" style="left:1191.89px;top:766px;font-size:15.3px;line-height:17px;letter-spacing:0.409px;color:#000;">580.67</div>
<div class="t" style="left:1302.89px;top:766px;font-size:15.3px;line-height:17px;letter-spacing:0.415px;color:#000;">58.11</div>
<div class="t" style="left:1413.33px;top:766px;font-size:15.3px;line-height:17px;letter-spacing:0.538px;color:#000;">174</div>
<div class="t" style="left:1524.73px;top:766px;font-size:15.3px;line-height:17px;letter-spacing:0.877px;color:#000;">2022/01/25</div>
<div class="t" style="left:1639.03px;top:766px;font-size:15.3px;line-height:17px;letter-spacing:0.494px;color:#000;">11:05:22</div>
<div class="t" style="left:14.14px;top:797px;font-size:15.3px;line-height:17px;letter-spacing:0.000px;color:#000;">8</div>
<div class="t" style="left:81.33px;top:796px;font-size:15.3px;line-height:17px;letter-spacing:0.401px;color:#000;">13.7213</div>
<div class="t" style="left:192.33px;top:796px;font-size:15.3px;line-height:17px;letter-spacing:0.397px;color:#000;">13.099040</div>
<div class="t" style="left:304.15px;top:796px;font-size:15.3px;line-height:17px;letter-spacing:0.411px;color:#000;">4.3869</div>
<div class="t" style="left:414.90px;top:796px;font-size:15.3px;line-height:17px;letter-spacing:0.404px;color:#000;">0.439684</div>
<div class="t" style="left:525.90px;top:796px;font-size:15.3px;line-height:17px;letter-spacing:0.402px;color:#000;">0.419743</div>
<div class="t" style="left:636.33px;top:796px;font-size:15.3px;line-height:17px;letter-spacing:0.397px;color:#000;">13.099040</div>
<div class="t" style="left:747.90px;top:796px;font-size:15.3px;line-height:17px;letter-spacing:0.409px;color:#000;">0.2457</div>
<div class="t" style="left:858.90px;top:796px;font-size:15.3px;line-height:17px;letter-spacing:0.410px;color:#000;">0.5278</div>
<div class="t" style="left:969.92px;top:796px;font-size:15.3px;line-height:17px;letter-spacing:0.491px;color:#000;">3079</div>
<div class="t" style="left:1080.90px;top:796px;font-size:15.3px;line-height:17px;letter-spacing:0.410px;color:#000;">0.0058</div>
<div class="t" style="left:1191.89px;top:796px;font-size:15.3px;line-height:17px;letter-spacing:0.410px;color:#000;">580.65</div>
<div class="t" style="left:1302.89px;top:796px;font-size:15.3px;line-height:17px;letter-spacing:0.416px;color:#000;">57.99</div>
<div class="t" style="left:1413.33px;top:796px;font-size:15.3px;line-height:17px;letter-spacing:0.533px;color:#000;">173</div>
<div class="t" style="left:1524.73px;top:796px;font-size:15.3px;line-height:17px;letter-spacing:0.877px;color:#000;">2022/01/25</div>
<div class="t" style="left:1639.03px;top:796px;font-size:15.3px;line-height:17px;letter-spacing:0.494px;color:#000;">11:05:22</div>
<div class="t" style="left:14.08px;top:827px;font-size:15.3px;line-height:17px;letter-spacing:0.000px;color:#000;">9</div>
<div class="t" style="left:81.33px;top:826px;font-size:15.3px;line-height:17px;letter-spacing:0.401px;color:#000;">13.7555</div>
<div class="t" style="left:192.33px;top:826px;font-size:15.3px;line-height:17px;letter-spacing:0.396px;color:#000;">13.126699</div>
<div class="t" style="left:304.15px;top:826px;font-size:15.3px;line-height:17px;letter-spacing:0.407px;color:#000;">4.38028</div>
<div class="t" style="left:414.90px;top:826px;font-size:15.3px;line-height:17px;letter-spacing:0.403px;color:#000;">0.440000</div>
<div class="t" style="left:525.90px;top:826px;font-size:15.3px;line-height:17px;letter-spacing:0.401px;color:#000;">0.419887</div>
<div class="t" style="left:636.33px;top:826px;font-size:15.3px;line-height:17px;letter-spacing:0.396px;color:#000;">13.126699</div>
<div class="t" style="left:747.90px;top:826px;font-size:15.3px;line-height:17px;letter-spacing:0.409px;color:#000;">0.2459</div>
<div class="t" style="left:858.90px;top:826px;font-size:15.3px;line-height:17px;letter-spacing:0.409px;color:#000;">0.5279</div>
<div class="t" style="left:969.92px;top:826px;font-size:15.3px;line-height:17px;letter-spacing:0.495px;color:#000;">3074</div>
<div class="t" style="left:1080.90px;top:826px;font-size:15.3px;line-height:17px;letter-spacing:0.410px;color:#000;">0.0058</div>
<div class="t" style="left:1191.89px;top:826px;font-size:15.3px;line-height:17px;letter-spacing:0.410px;color:#000;">580.66</div>
<div class="t" style="left:1302.89px;top:826px;font-size:15.3px;line-height:17px;letter-spacing:0.416px;color:#000;">58.13</div>
<div class="t" style="left:1413.33px;top:826px;font-size:15.3px;line-height:17px;letter-spacing:0.535px;color:#000;">180</div>
<div class="t" style="left:1524.73px;top:826px;font-size:15.3px;line-height:17px;letter-spacing:0.877px;color:#000;">2022/01/25</div>
<div class="t" style="left:1639.03px;top:826px;font-size:15.3px;line-height:17px;letter-spacing:0.494px;color:#000;">11:05:22</div>
<div class="t" style="left:13.63px;top:857px;font-size:15.3px;line-height:17px;letter-spacing:1.220px;color:#000;">10</div>
<div class="t" style="left:81.33px;top:856px;font-size:15.3px;line-height:17px;letter-spacing:0.401px;color:#000;">13.7875</div>
<div class="t" style="left:192.33px;top:856px;font-size:15.3px;line-height:17px;letter-spacing:0.396px;color:#000;">13.155776</div>
<div class="t" style="left:304.15px;top:856px;font-size:15.3px;line-height:17px;letter-spacing:0.407px;color:#000;">4.40548</div>
<div class="t" style="left:414.90px;top:856px;font-size:15.3px;line-height:17px;letter-spacing:0.402px;color:#000;">0.439811</div>
<div class="t" style="left:525.90px;top:856px;font-size:15.3px;line-height:17px;letter-spacing:0.402px;color:#000;">0.419658</div>
<div class="t" style="left:636.33px;top:856px;font-size:15.3px;line-height:17px;letter-spacing:0.396px;color:#000;">13.155776</div>
<div class="t" style="left:747.90px;top:856px;font-size:15.3px;line-height:17px;letter-spacing:0.410px;color:#000;">0.2458</div>
<div class="t" style="left:858.90px;top:856px;font-size:15.3px;line-height:17px;letter-spacing:0.410px;color:#000;">0.5278</div>
<div class="t" style="left:969.92px;top:856px;font-size:15.3px;line-height:17px;letter-spacing:0.492px;color:#000;">3076</div>
<div class="t" style="left:1080.90px;top:856px;font-size:15.3px;line-height:17px;letter-spacing:0.409px;color:#000;">0.0057</div>
<div class="t" style="left:1191.89px;top:856px;font-size:15.3px;line-height:17px;letter-spacing:0.409px;color:#000;">580.67</div>
<div class="t" style="left:1302.89px;top:856px;font-size:15.3px;line-height:17px;letter-spacing:0.415px;color:#000;">58.01</div>
<div class="t" style="left:1413.33px;top:856px;font-size:15.3px;line-height:17px;letter-spacing:0.532px;color:#000;">179</div>
<div class="t" style="left:1524.73px;top:856px;font-size:15.3px;line-height:17px;letter-spacing:0.877px;color:#000;">2022/01/25</div>
<div class="t" style="left:1639.03px;top:856px;font-size:15.3px;line-height:17px;letter-spacing:0.495px;color:#000;">11:05:23</div>
<div class="t" style="left:13.63px;top:887px;font-size:15.3px;line-height:17px;letter-spacing:1.208px;color:#000;">11</div>
<div class="t" style="left:81.33px;top:886px;font-size:15.3px;line-height:17px;letter-spacing:0.401px;color:#000;">13.6919</div>
<div class="t" style="left:192.33px;top:886px;font-size:15.3px;line-height:17px;letter-spacing:0.398px;color:#000;">13.064804</div>
<div class="t" style="left:304.15px;top:886px;font-size:15.3px;line-height:17px;letter-spacing:0.406px;color:#000;">4.36997</div>
<div class="t" style="left:414.90px;top:886px;font-size:15.3px;line-height:17px;letter-spacing:0.401px;color:#000;">0.439877</div>
<div class="t" style="left:525.90px;top:886px;font-size:15.3px;line-height:17px;letter-spacing:0.403px;color:#000;">0.419730</div>
<div class="t" style="left:636.33px;top:886px;font-size:15.3px;line-height:17px;letter-spacing:0.398px;color:#000;">13.064804</div>
<div class="t" style="left:747.90px;top:886px;font-size:15.3px;line-height:17px;letter-spacing:0.410px;color:#000;">0.2458</div>
<div class="t" style="left:858.90px;top:886px;font-size:15.3px;line-height:17px;letter-spacing:0.410px;color:#000;">0.5278</div>
<div class="t" style="left:969.92px;top:886px;font-size:15.3px;line-height:17px;letter-spacing:0.492px;color:#000;">3075</div>
<div class="t" style="left:1080.90px;top:886px;font-size:15.3px;line-height:17px;letter-spacing:0.409px;color:#000;">0.0057</div>
<div class="t" style="left:1191.89px;top:886px;font-size:15.3px;line-height:17px;letter-spacing:0.409px;color:#000;">580.67</div>
<div class="t" style="left:1302.89px;top:886px;font-size:15.3px;line-height:17px;letter-spacing:0.417px;color:#000;">58.05</div>
<div class="t" style="left:1413.33px;top:886px;font-size:15.3px;line-height:17px;letter-spacing:0.533px;color:#000;">188</div>
<div class="t" style="left:1524.73px;top:886px;font-size:15.3px;line-height:17px;letter-spacing:0.877px;color:#000;">2022/01/25</div>
<div class="t" style="left:1639.03px;top:886px;font-size:15.3px;line-height:17px;letter-spacing:0.495px;color:#000;">11:05:23</div>
<div class="t" style="left:13.63px;top:917px;font-size:15.3px;line-height:17px;letter-spacing:1.207px;color:#000;">12</div>
<div class="t" style="left:81.33px;top:916px;font-size:15.3px;line-height:17px;letter-spacing:0.401px;color:#000;">13.6848</div>
<div class="t" style="left:192.33px;top:916px;font-size:15.3px;line-height:17px;letter-spacing:0.398px;color:#000;">13.059874</div>
<div class="t" style="left:304.15px;top:916px;font-size:15.3px;line-height:17px;letter-spacing:0.411px;color:#000;">4.3801</div>
<div class="t" style="left:414.90px;top:916px;font-size:15.3px;line-height:17px;letter-spacing:0.402px;color:#000;">0.439676</div>
<div class="t" style="left:525.90px;top:916px;font-size:15.3px;line-height:17px;letter-spacing:0.401px;color:#000;">0.419597</div>
<div class="t" style="left:636.33px;top:916px;font-size:15.3px;line-height:17px;letter-spacing:0.398px;color:#000;">13.059874</div>
<div class="t" style="left:747.90px;top:916px;font-size:15.3px;line-height:17px;letter-spacing:0.410px;color:#000;">0.2458</div>
<div class="t" style="left:858.90px;top:916px;font-size:15.3px;line-height:17px;letter-spacing:0.409px;color:#000;">0.5277</div>
<div class="t" style="left:969.92px;top:916px;font-size:15.3px;line-height:17px;letter-spacing:0.492px;color:#000;">3078</div>
<div class="t" style="left:1080.90px;top:916px;font-size:15.3px;line-height:17px;letter-spacing:0.409px;color:#000;">0.0057</div>
<div class="t" style="left:1191.89px;top:916px;font-size:15.3px;line-height:17px;letter-spacing:0.409px;color:#000;">580.67</div>
<div class="t" style="left:1302.89px;top:916px;font-size:15.3px;line-height:17px;letter-spacing:0.417px;color:#000;">57.95</div>
<div class="t" style="left:1413.33px;top:916px;font-size:15.3px;line-height:17px;letter-spacing:0.533px;color:#000;">178</div>
<div class="t" style="left:1524.73px;top:916px;font-size:15.3px;line-height:17px;letter-spacing:0.877px;color:#000;">2022/01/25</div>
<div class="t" style="left:1639.03px;top:916px;font-size:15.3px;line-height:17px;letter-spacing:0.495px;color:#000;">11:05:23</div>
<div class="t" style="left:13.63px;top:947px;font-size:15.3px;line-height:17px;letter-spacing:1.214px;color:#000;">13</div>
<div class="t" style="left:81.33px;top:946px;font-size:15.3px;line-height:17px;letter-spacing:0.403px;color:#000;">13.7434</div>
<div class="t" style="left:192.33px;top:946px;font-size:15.3px;line-height:17px;letter-spacing:0.396px;color:#000;">13.118112</div>
<div class="t" style="left:304.15px;top:946px;font-size:15.3px;line-height:17px;letter-spacing:0.406px;color:#000;">4.38232</div>
<div class="t" style="left:414.90px;top:946px;font-size:15.3px;line-height:17px;letter-spacing:0.402px;color:#000;">0.439875</div>
<div class="t" style="left:525.90px;top:946px;font-size:15.3px;line-height:17px;letter-spacing:0.402px;color:#000;">0.419863</div>
<div class="t" style="left:636.33px;top:946px;font-size:15.3px;line-height:17px;letter-spacing:0.396px;color:#000;">13.118112</div>
<div class="t" style="left:747.90px;top:946px;font-size:15.3px;line-height:17px;letter-spacing:0.410px;color:#000;">0.2458</div>
<div class="t" style="left:858.90px;top:946px;font-size:15.3px;line-height:17px;letter-spacing:0.409px;color:#000;">0.5279</div>
<div class="t" style="left:969.92px;top:946px;font-size:15.3px;line-height:17px;letter-spacing:0.492px;color:#000;">3076</div>
<div class="t" style="left:1080.90px;top:946px;font-size:15.3px;line-height:17px;letter-spacing:0.410px;color:#000;">0.0058</div>
<div class="t" style="left:1191.89px;top:946px;font-size:15.3px;line-height:17px;letter-spacing:0.410px;color:#000;">580.65</div>
<div class="t" style="left:1302.89px;top:946px;font-size:15.3px;line-height:17px;letter-spacing:0.416px;color:#000;">58.09</div>
<div class="t" style="left:1413.33px;top:946px;font-size:15.3px;line-height:17px;letter-spacing:0.531px;color:#000;">172</div>
<div class="t" style="left:1524.73px;top:946px;font-size:15.3px;line-height:17px;letter-spacing:0.877px;color:#000;">2022/01/25</div>
<div class="t" style="left:1639.03px;top:946px;font-size:15.3px;line-height:17px;letter-spacing:0.497px;color:#000;">11:05:24</div>
<div class="r" style="left:1891px;top:581px;width:11px;height:10px;background:#f0f0f0;"></div>
<svg style="position:absolute;left:1891px;top:582px" width="10" height="9"><path d="M1 6 L9 6 L5 2 Z" fill="#999"/></svg>
<div class="r" style="left:1891px;top:591px;width:11px;height:20px;background:#c1c1c1;"></div>
<div class="r" style="left:1891px;top:611px;width:11px;height:237px;background:linear-gradient(90deg,#62acec,#4f94d6);"></div>
<div class="r" style="left:1891px;top:848px;width:11px;height:138px;background:#c1c1c1;"></div>
<div class="r" style="left:1891px;top:986px;width:11px;height:10px;background:#f0f0f0;"></div>
<svg style="position:absolute;left:1891px;top:986px" width="10" height="9"><path d="M1 2.5 L9 2.5 L5 7 Z" fill="#999"/></svg>
</body></html>
